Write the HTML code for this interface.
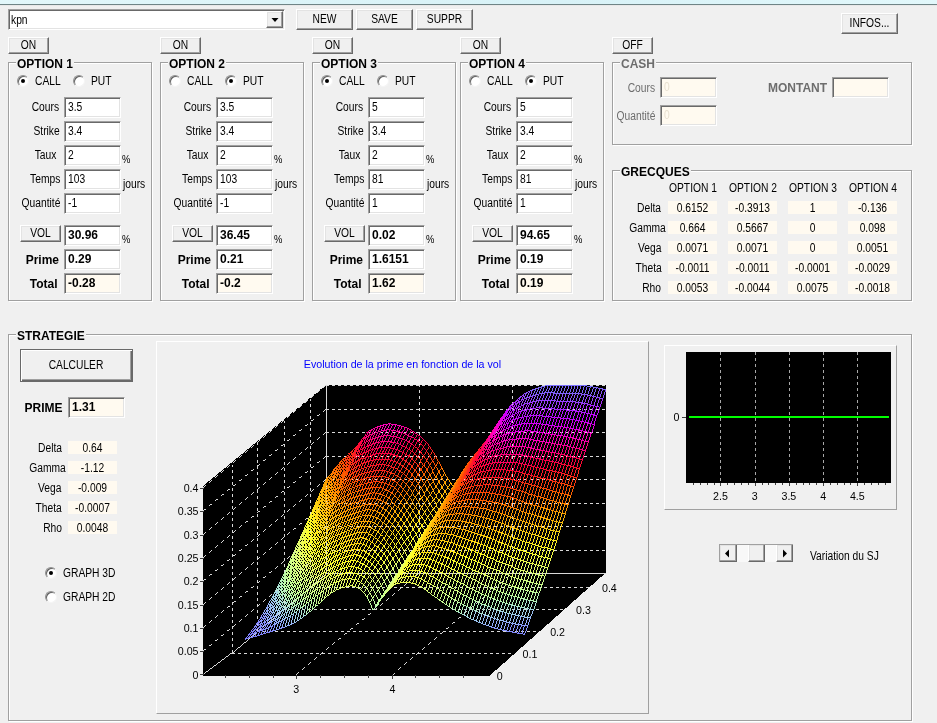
<!DOCTYPE html><html><head><meta charset="utf-8"><title>Options</title><style>
html,body{margin:0;padding:0}
body{width:937px;height:723px;overflow:hidden;background:#f0f0f0;position:relative;font-family:"Liberation Sans",Arial,sans-serif;font-size:12px;color:#000}
div,span{position:absolute;box-sizing:border-box;white-space:nowrap}
.t{line-height:14px;height:14px;transform:scaleX(.855);transform-origin:left center}
.tr{transform-origin:right center;text-align:right}
.tc{transform-origin:center center;text-align:center}
.b{font-weight:bold;transform:none}
.g{color:#6d6d6d}
.btn{background:#f0f0f0;border:1px solid;border-color:#fff #696969 #696969 #fff;box-shadow:inset -1px -1px 0 #a0a0a0,inset 1px 1px 0 #e3e3e3}
.in{background:#fff;border:1px solid;border-color:#a0a0a0 #fff #fff #a0a0a0;box-shadow:inset 1px 1px 0 #696969,inset -1px -1px 0 #e3e3e3}
.cr{background:#fffaf0}
.gb{border:1px solid #a0a0a0;box-shadow:1px 1px 0 #fff,inset 1px 1px 0 #fff}
.gt{background:#f0f0f0;font-weight:bold;line-height:14px;height:14px;padding:0 1px}
.cell{background:#fffaf0;height:13px}
.rad{width:12px;height:12px;border-radius:50%;background:#fff;border:1px solid;border-color:#909090 #f4f4f4 #f4f4f4 #909090;box-shadow:inset 1px 1px 0 #606060}
.rad i{position:absolute;left:3px;top:3px;width:4px;height:4px;border-radius:50%;background:#000}
.pl{font-size:10.67px;line-height:12px;height:12px}
</style></head><body>
<div id="ui" style="left:0;top:0;width:937px;height:723px;will-change:transform">
<div style="left:0;top:0;width:937px;height:4px;background:linear-gradient(90deg,#e2f7fa,#dcf4f8 30%,#d8f2f7 60%,#e2f8fb)"></div>
<div style="left:0;top:4px;width:937px;height:1px;background:#6f8486"></div>
<div style="left:0;top:5px;width:937px;height:1px;background:#e8e8e8"></div>
<div class="in" style="left:8px;top:9px;width:277px;height:21px"></div>
<span class="t " style="left:11px;top:12.5px;">kpn</span>
<div class="btn" style="left:266px;top:11px;width:17px;height:17px"></div>
<svg style="position:absolute;left:271px;top:18px" width="8" height="4"><path d="M0.5 0h7l-3.5 4z" fill="#000"/></svg>
<div class="btn" style="left:296px;top:9px;width:57px;height:21px"></div>
<span class="t tc " style="left:296.0px;width:57px;top:11.5px;">NEW</span>
<div class="btn" style="left:356px;top:9px;width:57px;height:21px"></div>
<span class="t tc " style="left:356.0px;width:57px;top:11.5px;">SAVE</span>
<div class="btn" style="left:416px;top:9px;width:57px;height:21px"></div>
<span class="t tc " style="left:416.0px;width:57px;top:11.5px;">SUPPR</span>
<div class="btn" style="left:841px;top:13px;width:57px;height:21px"></div>
<span class="t tc " style="left:841.0px;width:57px;top:15.5px;">INFOS...</span>
<div class="btn" style="left:8px;top:37px;width:41px;height:17px"></div>
<span class="t tc " style="left:8.0px;width:41px;top:37.5px;">ON</span>
<div class="gb" style="left:8px;top:62px;width:144px;height:239px"></div>
<span class="gt" style="left:16px;top:57px">OPTION 1</span>
<div class="rad" style="left:17px;top:75px"><i></i></div>
<span class="t " style="left:34.5px;top:74px;">CALL</span>
<div class="rad" style="left:73px;top:75px"></div>
<span class="t " style="left:90.5px;top:74px;">PUT</span>
<span class="t tr " style="right:877.5px;top:100px;">Cours</span>
<div class="in " style="left:64px;top:97px;width:57px;height:21px"></div>
<span class="t " style="left:68px;top:100px;">3.5</span>
<span class="t tr " style="right:877.5px;top:124px;">Strike</span>
<div class="in " style="left:64px;top:121px;width:57px;height:21px"></div>
<span class="t " style="left:68px;top:124px;">3.4</span>
<span class="t tr " style="right:880.5px;top:148px;">Taux</span>
<div class="in " style="left:64px;top:145px;width:57px;height:21px"></div>
<span class="t " style="left:68px;top:148px;">2</span>
<span class="t tr " style="right:876.7px;top:172px;">Temps</span>
<div class="in " style="left:64px;top:169px;width:57px;height:21px"></div>
<span class="t " style="left:68px;top:172px;">103</span>
<span class="t tr " style="right:876.7px;top:196px;">Quantité</span>
<div class="in " style="left:64px;top:193px;width:57px;height:21px"></div>
<span class="t " style="left:68px;top:196px;">-1</span>
<span class="t " style="left:121.5px;top:152px;font-size:11px">%</span>
<span class="t " style="left:123px;top:177px;">jours</span>
<div class="btn" style="left:20px;top:225px;width:41px;height:17px"></div>
<span class="t tc " style="left:20.0px;width:41px;top:225.5px;">VOL</span>
<div class="in " style="left:64px;top:225px;width:57px;height:21px"></div>
<span class="t b " style="left:68px;top:228px;">30.96</span>
<span class="t " style="left:121.5px;top:232px;font-size:11px">%</span>
<span class="t tr b" style="right:878px;top:253px;">Prime</span>
<div class="in " style="left:64px;top:249px;width:57px;height:21px"></div>
<span class="t b " style="left:68px;top:252px;">0.29</span>
<span class="t tr b" style="right:879.5px;top:277px;">Total</span>
<div class="in cr" style="left:64px;top:273px;width:57px;height:21px"></div>
<span class="t b " style="left:68px;top:276px;">-0.28</span>
<div class="btn" style="left:160px;top:37px;width:41px;height:17px"></div>
<span class="t tc " style="left:160.0px;width:41px;top:37.5px;">ON</span>
<div class="gb" style="left:160px;top:62px;width:144px;height:239px"></div>
<span class="gt" style="left:168px;top:57px">OPTION 2</span>
<div class="rad" style="left:169px;top:75px"></div>
<span class="t " style="left:186.5px;top:74px;">CALL</span>
<div class="rad" style="left:225px;top:75px"><i></i></div>
<span class="t " style="left:242.5px;top:74px;">PUT</span>
<span class="t tr " style="right:725.5px;top:100px;">Cours</span>
<div class="in " style="left:216px;top:97px;width:57px;height:21px"></div>
<span class="t " style="left:220px;top:100px;">3.5</span>
<span class="t tr " style="right:725.5px;top:124px;">Strike</span>
<div class="in " style="left:216px;top:121px;width:57px;height:21px"></div>
<span class="t " style="left:220px;top:124px;">3.4</span>
<span class="t tr " style="right:728.5px;top:148px;">Taux</span>
<div class="in " style="left:216px;top:145px;width:57px;height:21px"></div>
<span class="t " style="left:220px;top:148px;">2</span>
<span class="t tr " style="right:724.7px;top:172px;">Temps</span>
<div class="in " style="left:216px;top:169px;width:57px;height:21px"></div>
<span class="t " style="left:220px;top:172px;">103</span>
<span class="t tr " style="right:724.7px;top:196px;">Quantité</span>
<div class="in " style="left:216px;top:193px;width:57px;height:21px"></div>
<span class="t " style="left:220px;top:196px;">-1</span>
<span class="t " style="left:273.5px;top:152px;font-size:11px">%</span>
<span class="t " style="left:275px;top:177px;">jours</span>
<div class="btn" style="left:172px;top:225px;width:41px;height:17px"></div>
<span class="t tc " style="left:172.0px;width:41px;top:225.5px;">VOL</span>
<div class="in " style="left:216px;top:225px;width:57px;height:21px"></div>
<span class="t b " style="left:220px;top:228px;">36.45</span>
<span class="t " style="left:273.5px;top:232px;font-size:11px">%</span>
<span class="t tr b" style="right:726px;top:253px;">Prime</span>
<div class="in " style="left:216px;top:249px;width:57px;height:21px"></div>
<span class="t b " style="left:220px;top:252px;">0.21</span>
<span class="t tr b" style="right:727.5px;top:277px;">Total</span>
<div class="in cr" style="left:216px;top:273px;width:57px;height:21px"></div>
<span class="t b " style="left:220px;top:276px;">-0.2</span>
<div class="btn" style="left:312px;top:37px;width:41px;height:17px"></div>
<span class="t tc " style="left:312.0px;width:41px;top:37.5px;">ON</span>
<div class="gb" style="left:312px;top:62px;width:144px;height:239px"></div>
<span class="gt" style="left:320px;top:57px">OPTION 3</span>
<div class="rad" style="left:321px;top:75px"><i></i></div>
<span class="t " style="left:338.5px;top:74px;">CALL</span>
<div class="rad" style="left:377px;top:75px"></div>
<span class="t " style="left:394.5px;top:74px;">PUT</span>
<span class="t tr " style="right:573.5px;top:100px;">Cours</span>
<div class="in " style="left:368px;top:97px;width:57px;height:21px"></div>
<span class="t " style="left:372px;top:100px;">5</span>
<span class="t tr " style="right:573.5px;top:124px;">Strike</span>
<div class="in " style="left:368px;top:121px;width:57px;height:21px"></div>
<span class="t " style="left:372px;top:124px;">3.4</span>
<span class="t tr " style="right:576.5px;top:148px;">Taux</span>
<div class="in " style="left:368px;top:145px;width:57px;height:21px"></div>
<span class="t " style="left:372px;top:148px;">2</span>
<span class="t tr " style="right:572.7px;top:172px;">Temps</span>
<div class="in " style="left:368px;top:169px;width:57px;height:21px"></div>
<span class="t " style="left:372px;top:172px;">81</span>
<span class="t tr " style="right:572.7px;top:196px;">Quantité</span>
<div class="in " style="left:368px;top:193px;width:57px;height:21px"></div>
<span class="t " style="left:372px;top:196px;">1</span>
<span class="t " style="left:425.5px;top:152px;font-size:11px">%</span>
<span class="t " style="left:427px;top:177px;">jours</span>
<div class="btn" style="left:324px;top:225px;width:41px;height:17px"></div>
<span class="t tc " style="left:324.0px;width:41px;top:225.5px;">VOL</span>
<div class="in " style="left:368px;top:225px;width:57px;height:21px"></div>
<span class="t b " style="left:372px;top:228px;">0.02</span>
<span class="t " style="left:425.5px;top:232px;font-size:11px">%</span>
<span class="t tr b" style="right:574px;top:253px;">Prime</span>
<div class="in " style="left:368px;top:249px;width:57px;height:21px"></div>
<span class="t b " style="left:372px;top:252px;">1.6151</span>
<span class="t tr b" style="right:575.5px;top:277px;">Total</span>
<div class="in cr" style="left:368px;top:273px;width:57px;height:21px"></div>
<span class="t b " style="left:372px;top:276px;">1.62</span>
<div class="btn" style="left:460px;top:37px;width:41px;height:17px"></div>
<span class="t tc " style="left:460.0px;width:41px;top:37.5px;">ON</span>
<div class="gb" style="left:460px;top:62px;width:144px;height:239px"></div>
<span class="gt" style="left:468px;top:57px">OPTION 4</span>
<div class="rad" style="left:469px;top:75px"></div>
<span class="t " style="left:486.5px;top:74px;">CALL</span>
<div class="rad" style="left:525px;top:75px"><i></i></div>
<span class="t " style="left:542.5px;top:74px;">PUT</span>
<span class="t tr " style="right:425.5px;top:100px;">Cours</span>
<div class="in " style="left:516px;top:97px;width:57px;height:21px"></div>
<span class="t " style="left:520px;top:100px;">5</span>
<span class="t tr " style="right:425.5px;top:124px;">Strike</span>
<div class="in " style="left:516px;top:121px;width:57px;height:21px"></div>
<span class="t " style="left:520px;top:124px;">3.4</span>
<span class="t tr " style="right:428.5px;top:148px;">Taux</span>
<div class="in " style="left:516px;top:145px;width:57px;height:21px"></div>
<span class="t " style="left:520px;top:148px;">2</span>
<span class="t tr " style="right:424.70000000000005px;top:172px;">Temps</span>
<div class="in " style="left:516px;top:169px;width:57px;height:21px"></div>
<span class="t " style="left:520px;top:172px;">81</span>
<span class="t tr " style="right:424.70000000000005px;top:196px;">Quantité</span>
<div class="in " style="left:516px;top:193px;width:57px;height:21px"></div>
<span class="t " style="left:520px;top:196px;">1</span>
<span class="t " style="left:573.5px;top:152px;font-size:11px">%</span>
<span class="t " style="left:575px;top:177px;">jours</span>
<div class="btn" style="left:472px;top:225px;width:41px;height:17px"></div>
<span class="t tc " style="left:472.0px;width:41px;top:225.5px;">VOL</span>
<div class="in " style="left:516px;top:225px;width:57px;height:21px"></div>
<span class="t b " style="left:520px;top:228px;">94.65</span>
<span class="t " style="left:573.5px;top:232px;font-size:11px">%</span>
<span class="t tr b" style="right:426px;top:253px;">Prime</span>
<div class="in " style="left:516px;top:249px;width:57px;height:21px"></div>
<span class="t b " style="left:520px;top:252px;">0.19</span>
<span class="t tr b" style="right:427.5px;top:277px;">Total</span>
<div class="in cr" style="left:516px;top:273px;width:57px;height:21px"></div>
<span class="t b " style="left:520px;top:276px;">0.19</span>
<div class="btn" style="left:612px;top:37px;width:41px;height:17px"></div>
<span class="t tc " style="left:612.0px;width:41px;top:37.5px;">OFF</span>
<div class="gb" style="left:612px;top:62px;width:300px;height:83px"></div>
<span class="gt g" style="left:620px;top:57px">CASH</span>
<span class="t tr g" style="right:281.5px;top:80.5px;">Cours</span>
<div class="in cr" style="left:660px;top:77px;width:57px;height:21px"></div>
<span class="t " style="left:664px;top:80px;color:#e8e0d0">0</span>
<span class="t tr g" style="right:281.5px;top:108.5px;">Quantité</span>
<div class="in cr" style="left:660px;top:105px;width:57px;height:21px"></div>
<span class="t " style="left:664px;top:108px;color:#e8e0d0">0</span>
<span class="t b g" style="left:768px;top:80.5px;">MONTANT</span>
<div class="in cr" style="left:832px;top:77px;width:57px;height:21px"></div>
<div class="gb" style="left:612px;top:170px;width:300px;height:131px"></div>
<span class="gt" style="left:620px;top:165px">GRECQUES</span>
<span class="t tc " style="left:657.8px;width:70px;top:180.5px;">OPTION 1</span>
<span class="t tc " style="left:717.8px;width:70px;top:180.5px;">OPTION 2</span>
<span class="t tc " style="left:777.8px;width:70px;top:180.5px;">OPTION 3</span>
<span class="t tc " style="left:837.8px;width:70px;top:180.5px;">OPTION 4</span>
<span class="t tr " style="right:275.79999999999995px;top:200.5px;">Delta</span>
<div class="cell" style="left:668px;top:201px;width:49px"></div>
<span class="t tc " style="left:668.0px;width:49px;top:200.5px;">0.6152</span>
<div class="cell" style="left:728px;top:201px;width:49px"></div>
<span class="t tc " style="left:728.0px;width:49px;top:200.5px;">-0.3913</span>
<div class="cell" style="left:788px;top:201px;width:49px"></div>
<span class="t tc " style="left:788.0px;width:49px;top:200.5px;">1</span>
<div class="cell" style="left:848px;top:201px;width:49px"></div>
<span class="t tc " style="left:848.0px;width:49px;top:200.5px;">-0.136</span>
<span class="t tr " style="right:271.70000000000005px;top:220.5px;">Gamma</span>
<div class="cell" style="left:668px;top:221px;width:49px"></div>
<span class="t tc " style="left:668.0px;width:49px;top:220.5px;">0.664</span>
<div class="cell" style="left:728px;top:221px;width:49px"></div>
<span class="t tc " style="left:728.0px;width:49px;top:220.5px;">0.5667</span>
<div class="cell" style="left:788px;top:221px;width:49px"></div>
<span class="t tc " style="left:788.0px;width:49px;top:220.5px;">0</span>
<div class="cell" style="left:848px;top:221px;width:49px"></div>
<span class="t tc " style="left:848.0px;width:49px;top:220.5px;">0.098</span>
<span class="t tr " style="right:275.79999999999995px;top:240.5px;">Vega</span>
<div class="cell" style="left:668px;top:241px;width:49px"></div>
<span class="t tc " style="left:668.0px;width:49px;top:240.5px;">0.0071</span>
<div class="cell" style="left:728px;top:241px;width:49px"></div>
<span class="t tc " style="left:728.0px;width:49px;top:240.5px;">0.0071</span>
<div class="cell" style="left:788px;top:241px;width:49px"></div>
<span class="t tc " style="left:788.0px;width:49px;top:240.5px;">0</span>
<div class="cell" style="left:848px;top:241px;width:49px"></div>
<span class="t tc " style="left:848.0px;width:49px;top:240.5px;">0.0051</span>
<span class="t tr " style="right:275.79999999999995px;top:260.5px;">Theta</span>
<div class="cell" style="left:668px;top:261px;width:49px"></div>
<span class="t tc " style="left:668.0px;width:49px;top:260.5px;">-0.0011</span>
<div class="cell" style="left:728px;top:261px;width:49px"></div>
<span class="t tc " style="left:728.0px;width:49px;top:260.5px;">-0.0011</span>
<div class="cell" style="left:788px;top:261px;width:49px"></div>
<span class="t tc " style="left:788.0px;width:49px;top:260.5px;">-0.0001</span>
<div class="cell" style="left:848px;top:261px;width:49px"></div>
<span class="t tc " style="left:848.0px;width:49px;top:260.5px;">-0.0029</span>
<span class="t tr " style="right:275.79999999999995px;top:280.5px;">Rho</span>
<div class="cell" style="left:668px;top:281px;width:49px"></div>
<span class="t tc " style="left:668.0px;width:49px;top:280.5px;">0.0053</span>
<div class="cell" style="left:728px;top:281px;width:49px"></div>
<span class="t tc " style="left:728.0px;width:49px;top:280.5px;">-0.0044</span>
<div class="cell" style="left:788px;top:281px;width:49px"></div>
<span class="t tc " style="left:788.0px;width:49px;top:280.5px;">0.0075</span>
<div class="cell" style="left:848px;top:281px;width:49px"></div>
<span class="t tc " style="left:848.0px;width:49px;top:280.5px;">-0.0018</span>
<div class="gb" style="left:8px;top:334px;width:904px;height:387px"></div>
<span class="gt" style="left:16px;top:329px">STRATEGIE</span>
<div style="left:20px;top:349px;width:113px;height:33px;background:#f0f0f0;border:1px solid #696969;box-shadow:inset 1px 1px 0 #fff,inset -1px -1px 0 #696969,inset -2px -2px 0 #a0a0a0"></div>
<span class="t tc " style="left:26.0px;width:100px;top:358px;">CALCULER</span>
<span class="t b" style="left:24.5px;top:400.5px;">PRIME</span>
<div class="in cr" style="left:68px;top:397px;width:57px;height:21px"></div>
<span class="t b " style="left:72px;top:400px;">1.31</span>
<span class="t tr " style="right:875.2px;top:440.5px;">Delta</span>
<div class="cell" style="left:68px;top:441px;width:49px"></div>
<span class="t tc " style="left:68.0px;width:49px;top:440.5px;">0.64</span>
<span class="t tr " style="right:871.7px;top:460.5px;">Gamma</span>
<div class="cell" style="left:68px;top:461px;width:49px"></div>
<span class="t tc " style="left:68.0px;width:49px;top:460.5px;">-1.12</span>
<span class="t tr " style="right:875.2px;top:480.5px;">Vega</span>
<div class="cell" style="left:68px;top:481px;width:49px"></div>
<span class="t tc " style="left:68.0px;width:49px;top:480.5px;">-0.009</span>
<span class="t tr " style="right:875.2px;top:500.5px;">Theta</span>
<div class="cell" style="left:68px;top:501px;width:49px"></div>
<span class="t tc " style="left:68.0px;width:49px;top:500.5px;">-0.0007</span>
<span class="t tr " style="right:875.2px;top:520.5px;">Rho</span>
<div class="cell" style="left:68px;top:521px;width:49px"></div>
<span class="t tc " style="left:68.0px;width:49px;top:520.5px;">0.0048</span>
<div class="rad" style="left:45px;top:566.5px"><i></i></div>
<span class="t " style="left:62.5px;top:565.5px;">GRAPH 3D</span>
<div class="rad" style="left:45px;top:590.5px"></div>
<span class="t " style="left:62.5px;top:589.5px;">GRAPH 2D</span>
<div style="left:156px;top:341px;width:493px;height:373px;border:1px solid;border-color:#fff #a0a0a0 #a0a0a0 #fff"></div>
<div style="left:664px;top:345px;width:233px;height:165px;border:1px solid;border-color:#fff #a0a0a0 #a0a0a0 #fff"></div>
<div style="left:719px;top:544px;width:74px;height:18px;background:#f8f8f8"></div>
<div class="btn" style="left:719px;top:544px;width:18px;height:18px"></div>
<div class="btn" style="left:776px;top:544px;width:17px;height:18px"></div>
<div class="btn" style="left:748px;top:544px;width:17px;height:18px"></div>
<div style="left:719px;top:544px;width:74px;height:1px;background:#a0a0a0"></div><div style="left:719px;top:544px;width:1px;height:18px;background:#a0a0a0"></div>
<svg style="position:absolute;left:719px;top:544px" width="74" height="18"><path d="M10 5.5v8l-4-4zM64 5.5v8l4-4z" fill="#000"/></svg>
<span class="t " style="left:810px;top:549px;">Variation du SJ</span>
<svg style="position:absolute;left:0;top:0" width="937" height="723" viewBox="0 0 937 723" font-family="Liberation Sans,Arial,sans-serif" font-size="10.67">
<g shape-rendering="crispEdges">
<rect x="686" y="352" width="205" height="131" fill="#000"/>
<path d="M720.5 352V483" stroke="#a8a8a8" stroke-dasharray="3 3" fill="none"/>
<path d="M755.5 352V483" stroke="#a8a8a8" stroke-dasharray="3 3" fill="none"/>
<path d="M789.5 352V483" stroke="#a8a8a8" stroke-dasharray="3 3" fill="none"/>
<path d="M823.5 352V483" stroke="#a8a8a8" stroke-dasharray="3 3" fill="none"/>
<path d="M857.5 352V483" stroke="#a8a8a8" stroke-dasharray="3 3" fill="none"/>
<path d="M689 417H889" stroke="#00ff00" stroke-width="2" fill="none"/>
<path d="M693.5 483v2M700.5 483v2M707.5 483v2M714.5 483v2M720.5 483v3M727.5 483v2M734.5 483v2M741.5 483v2M748.5 483v2M755.5 483v3M762.5 483v2M768.5 483v2M775.5 483v2M782.5 483v2M789.5 483v3M796.5 483v2M803.5 483v2M809.5 483v2M816.5 483v2M823.5 483v3M830.5 483v2M837.5 483v2M844.5 483v2M850.5 483v2M857.5 483v3M864.5 483v2M871.5 483v2M878.5 483v2M885.5 483v2" stroke="#404040" fill="none"/>
<path d="M682 417.5h4" stroke="#404040" fill="none"/>
</g>
<text x="720.5" y="500" text-anchor="middle">2.5</text>
<text x="754.7" y="500" text-anchor="middle">3</text>
<text x="788.9" y="500" text-anchor="middle">3.5</text>
<text x="823.1" y="500" text-anchor="middle">4</text>
<text x="857.3" y="500" text-anchor="middle">4.5</text>
<text x="679.5" y="421" text-anchor="end">0</text>
<g shape-rendering="crispEdges" fill="none">
<path d="M203 486L326.3 384.7L605.5 384.7L605.5 573L489.3 676L203 676z" fill="#000"/>
<path d="M326.3 550.5H605.5M326.3 526.5H605.5M326.3 503.5H605.5M326.3 479.5H605.5M326.3 456.5H605.5M326.3 432.5H605.5M326.3 409.5H605.5M326.3 385.5H605.5M232.5 653.0V464.5M231.5 653.5H513.6M257.5 631.2V442.7M257.4 631.5H538.6M284.5 609.3V420.8M283.5 609.5H563.8M310.5 587.2V398.7M309.6 587.5H589.2M419.5 573.0V384.7M512.5 573.0V384.7" stroke="#d8d8d8" stroke-dasharray="3 3"/>
<path d="M203.0 651.2L326.3 549.5M203.0 627.9L326.3 526.1M203.0 604.5L326.3 502.6M203.0 581.2L326.3 479.1M203.0 557.9L326.3 455.7M203.0 534.5L326.3 432.2M203.0 511.2L326.3 408.7M203.0 487.9L326.3 385.3M296.0 674.7L419.4 573.0M392.5 674.7L512.4 573.0" stroke="#d8d8d8" stroke-width="0.99" stroke-dasharray="3.9 3.9"/>
<path d="M203 674.5L231.5 653L326.3 573" stroke="#d8d8d8" stroke-width="0.99"/><path d="M326.3 573.5H605.5M326.5 573V384.7" stroke="#d8d8d8"/>
</g>
<clipPath id="bx"><rect x="203" y="385" width="403" height="291"/></clipPath>
<g shape-rendering="crispEdges" fill="none" stroke-width="0.99" clip-path="url(#bx)">
<path d="M245.4 639.3L248.4 638.3L251.5 637.3L254.5 636.4L257.5 635.5M248.3 635.4L251.3 634.2L254.4 633.0M251.2 631.6L254.2 630.3M245.4 639.3L248.3 635.4L251.2 631.6L254.1 627.6M248.4 638.3L251.3 634.2L254.2 630.3M251.5 637.3L254.4 633.0" stroke="#7f80ff"/>
<path d="M257.5 635.5L260.6 634.6L263.6 633.7L266.7 632.9L269.7 632.1L272.7 631.2M509.5 631.7L512.6 632.3L515.6 632.8L518.6 633.3L521.7 633.8L524.7 634.2M254.4 633.0L257.4 631.8L260.4 630.6L263.5 629.3M254.2 630.3L257.3 628.9L260.3 627.5L263.3 626.0M254.1 627.6L257.1 626.1L260.1 624.5M257.0 623.4L260.0 621.7M254.1 627.6L257.0 623.4L259.8 619.0M254.2 630.3L257.1 626.1L260.0 621.7M254.4 633.0L257.3 628.9L260.1 624.5M254.5 636.4L257.4 631.8L260.3 627.5M257.5 635.5L260.4 630.6L263.3 626.0M260.6 634.6L263.5 629.3M263.6 633.7L266.5 628.1" stroke="#8487ff"/>
<path d="M272.7 631.2L275.8 630.2L278.8 629.2L281.8 628.1L284.9 627.0M491.3 627.0L494.3 628.0L497.4 628.9L500.4 629.7L503.4 630.4L506.5 631.1L509.5 631.7M263.5 629.3L266.5 628.1L269.5 626.8L272.6 625.4M521.5 625.2L524.6 625.7L527.6 626.1M263.3 626.0L266.4 624.4L269.4 622.9M260.1 624.5L263.2 622.9L266.2 621.1M260.0 621.7L263.0 619.9L266.1 618.0M259.8 619.0L262.9 617.1L265.9 615.1M259.8 619.0L262.7 614.3M260.0 621.7L262.9 617.1L265.8 612.2M260.1 624.5L263.0 619.9L265.9 615.1M260.3 627.5L263.2 622.9L266.1 618.0M263.3 626.0L266.2 621.1M263.5 629.3L266.4 624.4L269.2 619.3M266.5 628.1L269.4 622.9M266.7 632.9L269.5 626.8L272.4 621.2M269.7 632.1L272.6 625.4M272.7 631.2L275.6 623.9M506.5 631.1L509.4 622.7M509.5 631.7L512.4 623.4M512.6 632.3L515.4 624.0M515.6 632.8L518.5 624.6M518.6 633.3L521.5 625.2M521.7 633.8L524.6 625.7M524.7 634.2L527.6 626.1" stroke="#8a95ff"/>
<path d="M284.9 627.0L287.9 625.8L290.9 624.5L294.0 623.0M482.2 623.6L485.2 624.8L488.3 625.9L491.3 627.0M272.6 625.4L275.6 623.9L278.6 622.3L281.7 620.6M503.3 621.2L506.3 622.0L509.4 622.7L512.4 623.4L515.4 624.0L518.5 624.6L521.5 625.2M269.4 622.9L272.4 621.2L275.5 619.5M266.2 621.1L269.2 619.3L272.3 617.4L275.3 615.5M266.1 618.0L269.1 616.0L272.1 613.9M265.9 615.1L269.0 612.9L272.0 610.7M262.7 614.3L265.8 612.2L268.8 610.0M265.6 609.4L268.7 607.1M262.7 614.3L265.6 609.4L268.5 604.3M265.8 612.2L268.7 607.1M265.9 615.1L268.8 610.0M266.1 618.0L269.0 612.9M266.2 621.1L269.1 616.0L272.0 610.7M269.2 619.3L272.1 613.9M269.4 622.9L272.3 617.4M272.4 621.2L275.3 615.5M272.6 625.4L275.5 619.5M275.6 623.9L278.5 617.6M275.8 630.2L278.6 622.3M278.8 629.2L281.7 620.6M281.8 628.1L284.7 618.9M491.3 627.0L494.2 618.5M494.3 628.0L497.2 619.5M497.4 628.9L500.3 620.4M500.4 629.7L503.3 621.2M503.4 630.4L506.3 622.0M518.5 624.6L521.4 616.4M521.5 625.2L524.4 617.0M524.6 625.7L527.4 617.5M527.6 626.1L530.5 617.9" stroke="#94aeff"/>
<path d="M294.0 623.0L297.0 621.2L300.0 619.2M473.1 619.8L476.1 621.1L479.2 622.4L482.2 623.6M281.7 620.6L284.7 618.9L287.8 617.1M491.2 617.4L494.2 618.5L497.2 619.5L500.3 620.4L503.3 621.2M275.5 619.5L278.5 617.6L281.5 615.6M515.3 615.1L518.3 615.7L521.4 616.4L524.4 617.0L527.4 617.5L530.5 617.9M275.3 615.5L278.4 613.4M272.1 613.9L275.2 611.8L278.2 609.5M272.0 610.7L275.0 608.3M268.8 610.0L271.8 607.6L274.9 605.1M268.7 607.1L271.7 604.6L274.7 602.0M268.5 604.3L271.6 601.7M268.5 604.3L271.4 598.9M268.7 607.1L271.6 601.7M268.8 610.0L271.7 604.6L274.6 599.1M269.0 612.9L271.8 607.6L274.7 602.0M272.0 610.7L274.9 605.1M272.1 613.9L275.0 608.3M272.3 617.4L275.2 611.8M275.3 615.5L278.2 609.5M275.5 619.5L278.4 613.4M278.5 617.6L281.4 611.2M278.6 622.3L281.5 615.6M281.7 620.6L284.6 613.5M284.9 627.0L287.8 617.1M287.9 625.8L290.8 615.2M290.9 624.5L293.8 613.2M482.2 623.6L485.1 615.0M485.2 624.8L488.1 616.2M488.3 625.9L491.2 617.4M500.3 620.4L503.2 611.9M503.3 621.2L506.2 612.8M506.3 622.0L509.2 613.6M509.4 622.7L512.3 614.3M512.4 623.4L515.3 615.1M515.4 624.0L518.3 615.7M530.5 617.9L533.4 609.8" stroke="#9cc2f7"/>
<path d="M300.0 619.2L303.1 617.0L306.1 614.7M464.0 615.2L467.0 616.8L470.1 618.3L473.1 619.8M287.8 617.1L290.8 615.2L293.8 613.2M482.1 613.7L485.1 615.0L488.1 616.2L491.2 617.4M281.5 615.6L284.6 613.5L287.6 611.4M500.1 610.9L503.2 611.9L506.2 612.8L509.2 613.6L512.3 614.3L515.3 615.1M278.4 613.4L281.4 611.2L284.4 608.8M527.3 608.7L530.3 609.3L533.4 609.8M278.2 609.5L281.2 607.1M275.0 608.3L278.1 605.9L281.1 603.3M274.9 605.1L277.9 602.5M274.7 602.0L277.8 599.3M271.6 601.7L274.6 599.1L277.6 596.3M271.4 598.9L274.4 596.2L277.5 593.3M274.3 593.4L277.3 590.5M271.4 598.9L274.3 593.4M271.6 601.7L274.4 596.2L277.3 590.5M274.6 599.1L277.5 593.3M274.7 602.0L277.6 596.3M274.9 605.1L277.8 599.3M275.0 608.3L277.9 602.5M275.2 611.8L278.1 605.9L281.0 599.8M278.2 609.5L281.1 603.3M278.4 613.4L281.2 607.1M281.4 611.2L284.3 604.6M281.5 615.6L284.4 608.8M284.6 613.5L287.5 606.4M284.7 618.9L287.6 611.4M287.8 617.1L290.6 609.2M294.0 623.0L296.9 611.2M297.0 621.2L299.9 608.9M473.1 619.8L476.0 611.1M476.1 621.1L479.0 612.5M479.2 622.4L482.1 613.7M491.2 617.4L494.0 608.8M494.2 618.5L497.1 609.9M497.2 619.5L500.1 610.9M512.3 614.3L515.2 605.9M515.3 615.1L518.2 606.7M518.3 615.7L521.2 607.4M521.4 616.4L524.3 608.1M524.4 617.0L527.3 608.7M527.4 617.5L530.3 609.3" stroke="#a4d4ec"/>
<path d="M306.1 614.7L309.2 612.2M457.9 611.9L460.9 613.6L464.0 615.2M293.8 613.2L296.9 611.2L299.9 608.9M472.9 609.6L476.0 611.1L479.0 612.5L482.1 613.7M287.6 611.4L290.6 609.2L293.7 606.9M488.0 606.4L491.0 607.6L494.0 608.8L497.1 609.9L500.1 610.9M284.4 608.8L287.5 606.4L290.5 604.0M509.1 604.3L512.1 605.1L515.2 605.9L518.2 606.7L521.2 607.4L524.3 608.1L527.3 608.7M281.2 607.1L284.3 604.6L287.3 602.0M281.1 603.3L284.1 600.7M277.9 602.5L281.0 599.8L284.0 597.0M277.8 599.3L280.8 596.5M277.6 596.3L280.7 593.3M277.5 593.3L280.5 590.3M277.3 590.5L280.4 587.4M277.2 587.7L280.2 584.6M274.3 593.4L277.2 587.7L280.1 581.8M277.3 590.5L280.2 584.6M277.5 593.3L280.4 587.4M277.6 596.3L280.5 590.3M277.8 599.3L280.7 593.3M277.9 602.5L280.8 596.5M281.0 599.8L283.8 593.6M281.1 603.3L284.0 597.0M281.2 607.1L284.1 600.7M284.3 604.6L287.2 598.0M284.4 608.8L287.3 602.0M287.6 611.4L290.5 604.0M290.8 615.2L293.7 606.9M293.8 613.2L296.7 604.7M300.0 619.2L302.9 606.6M303.1 617.0L306.0 604.1M464.0 615.2L466.9 606.6M467.0 616.8L469.9 608.1M470.1 618.3L472.9 609.6M479.0 612.5L481.9 603.8M482.1 613.7L484.9 605.1M485.1 615.0L488.0 606.4M488.1 616.2L491.0 607.6M500.1 610.9L503.0 602.4M503.2 611.9L506.0 603.4M506.2 612.8L509.1 604.3M509.2 613.6L512.1 605.1M524.3 608.1L527.1 599.7M527.3 608.7L530.2 600.4M530.3 609.3L533.2 601.0M533.4 609.8L536.3 601.5" stroke="#ade5d5"/>
<path d="M309.2 612.2L312.2 609.8L315.2 607.2M372.9 609.9L375.9 606.9M451.8 608.3L454.9 610.1L457.9 611.9M299.9 608.9L302.9 606.6M463.8 605.0L466.9 606.6L469.9 608.1L472.9 609.6M293.7 606.9L296.7 604.7L299.8 602.4M478.9 602.4L481.9 603.8L484.9 605.1L488.0 606.4M290.5 604.0L293.5 601.5M496.9 600.2L500.0 601.3L503.0 602.4L506.0 603.4L509.1 604.3M287.3 602.0L290.4 599.3M521.1 598.2L524.1 599.0L527.1 599.7L530.2 600.4L533.2 601.0L536.3 601.5M284.1 600.7L287.2 598.0L290.2 595.1M284.0 597.0L287.0 594.2M280.8 596.5L283.8 593.6L286.9 590.6M280.7 593.3L283.7 590.3M280.5 590.3L283.5 587.2M280.4 587.4L283.4 584.2M280.2 584.6L283.3 581.4M280.1 581.8L283.1 578.6M280.1 581.8L283.0 575.8M280.2 584.6L283.1 578.6M280.4 587.4L283.3 581.4M280.5 590.3L283.4 584.2M280.7 593.3L283.5 587.2M280.8 596.5L283.7 590.3M283.8 593.6L286.7 587.2M284.0 597.0L286.9 590.6M284.1 600.7L287.0 594.2M287.3 602.0L290.2 595.1M287.5 606.4L290.4 599.3M290.5 604.0L293.4 596.7M290.6 609.2L293.5 601.5M293.7 606.9L296.6 599.1M296.9 611.2L299.8 602.4M299.9 608.9L302.8 600.0M306.1 614.7L309.0 601.7M372.9 609.9L375.8 605.5M457.9 611.9L460.8 603.3M460.9 613.6L463.8 605.0M472.9 609.6L475.8 601.0M476.0 611.1L478.9 602.4M488.0 606.4L490.9 597.7M491.0 607.6L493.9 599.0M494.0 608.8L496.9 600.2M497.1 609.9L500.0 601.3M509.1 604.3L512.0 595.7M512.1 605.1L515.0 596.6M515.2 605.9L518.0 597.4M518.2 606.7L521.1 598.2M521.2 607.4L524.1 599.0M536.3 601.5L539.1 593.2" stroke="#b6f5bc"/>
<path d="M315.2 607.2L318.3 604.3M369.9 602.6L372.9 609.9M375.9 606.9L379.0 602.1M445.8 604.4L448.8 606.4L451.8 608.3M302.9 606.6L306.0 604.1L309.0 601.7M372.8 598.2L375.8 605.5L378.8 602.5M457.8 601.7L460.8 603.3L463.8 605.0M299.8 602.4L302.8 600.0M378.7 601.1L381.7 598.2M472.8 599.5L475.8 601.0L478.9 602.4M293.5 601.5L296.6 599.1L299.6 596.6M487.8 596.5L490.9 597.7L493.9 599.0L496.9 600.2M290.4 599.3L293.4 596.7L296.4 594.0M505.9 593.8L508.9 594.8L512.0 595.7L515.0 596.6L518.0 597.4L521.1 598.2M290.2 595.1L293.2 592.3M533.1 592.0L536.1 592.6L539.1 593.2M287.0 594.2L290.1 591.2L293.1 588.2M286.9 590.6L289.9 587.5M283.7 590.3L286.7 587.2L289.8 584.0M283.5 587.2L286.6 584.0M283.4 584.2L286.4 580.9M283.3 581.4L286.3 578.0M283.1 578.6L286.1 575.2M283.0 575.8L286.0 572.4M283.0 575.8L285.9 569.7M283.1 578.6L286.0 572.4M283.3 581.4L286.1 575.2M283.4 584.2L286.3 578.0M283.5 587.2L286.4 580.9M283.7 590.3L286.6 584.0M286.7 587.2L289.6 580.7M286.9 590.6L289.8 584.0M287.0 594.2L289.9 587.5M287.2 598.0L290.1 591.2M290.2 595.1L293.1 588.2M290.4 599.3L293.2 592.3M293.5 601.5L296.4 594.0M296.7 604.7L299.6 596.6M299.8 602.4L302.6 594.2M302.9 606.6L305.8 597.6M309.2 612.2L312.0 599.3M312.2 609.8L315.1 597.0M375.8 605.5L378.7 601.1L381.6 596.7M375.9 606.9L378.8 602.5L381.7 598.2M451.8 608.3L454.7 599.9M454.9 610.1L457.8 601.7M463.8 605.0L466.7 596.4M466.9 606.6L469.8 597.9M469.9 608.1L472.8 599.5M478.9 602.4L481.8 593.8M481.9 603.8L484.8 595.2M484.9 605.1L487.8 596.5M496.9 600.2L499.8 591.6M500.0 601.3L502.9 592.7M503.0 602.4L505.9 593.8M506.0 603.4L508.9 594.8M518.0 597.4L520.9 588.9M521.1 598.2L524.0 589.7M524.1 599.0L527.0 590.5M527.1 599.7L530.0 591.3M530.2 600.4L533.1 592.0M533.2 601.0L536.1 592.6" stroke="#bffca8"/>
<path d="M318.3 604.3L321.3 601.3L324.3 598.5M366.8 597.1L369.9 602.6M379.0 602.1L382.0 597.9M439.7 600.3L442.7 602.3L445.8 604.4M309.0 601.7L312.0 599.3L315.1 597.0M378.8 602.5L381.9 597.8M451.7 598.0L454.7 599.9L457.8 601.7M302.8 600.0L305.8 597.6L308.9 595.1M375.6 593.9L378.7 601.1M381.7 598.2L384.8 593.4M463.7 594.8L466.7 596.4L469.8 597.9L472.8 599.5M299.6 596.6L302.6 594.2L305.7 591.8M378.5 589.7L381.6 596.7L384.6 593.8M478.7 592.3L481.8 593.8L484.8 595.2L487.8 596.5M296.4 594.0L299.5 591.4M384.5 592.4L387.5 589.4M496.8 590.4L499.8 591.6L502.9 592.7L505.9 593.8M293.2 592.3L296.3 589.4M517.9 588.0L520.9 588.9L524.0 589.7L527.0 590.5L530.0 591.3L533.1 592.0M293.1 588.2L296.1 585.2M289.9 587.5L292.9 584.4M289.8 584.0L292.8 580.8M286.6 584.0L289.6 580.7L292.7 577.4M286.4 580.9L289.5 577.5M286.3 578.0L289.3 574.5M286.1 575.2L289.2 571.7M286.0 572.4L289.0 568.9M285.9 569.7L288.9 566.2M285.9 569.7L288.7 563.5M286.0 572.4L288.9 566.2M286.1 575.2L289.0 568.9M286.3 578.0L289.2 571.7M286.4 580.9L289.3 574.5M286.6 584.0L289.5 577.5M289.6 580.7L292.5 574.1M289.8 584.0L292.7 577.4M289.9 587.5L292.8 580.8M290.1 591.2L292.9 584.4M293.1 588.2L296.0 581.3M293.2 592.3L296.1 585.2M293.4 596.7L296.3 589.4M296.4 594.0L299.3 586.5M296.6 599.1L299.5 591.4M299.6 596.6L302.5 588.9M302.8 600.0L305.7 591.8M306.0 604.1L308.9 595.1M309.0 601.7L311.9 592.7M315.2 607.2L318.1 594.6M369.9 602.6L372.8 598.2M381.6 596.7L384.5 592.4L387.4 588.0M381.7 598.2L384.6 593.8L387.5 589.4M379.0 602.1L381.9 597.8M445.8 604.4L448.7 596.2M448.8 606.4L451.7 598.0M457.8 601.7L460.7 593.2M460.8 603.3L463.7 594.8M472.8 599.5L475.7 590.9M475.8 601.0L478.7 592.3M487.8 596.5L490.7 587.8M490.9 597.7L493.8 589.1M493.9 599.0L496.8 590.4M505.9 593.8L508.8 585.2M508.9 594.8L511.8 586.2M512.0 595.7L514.9 587.1M515.0 596.6L517.9 588.0M530.0 591.3L532.9 582.7M533.1 592.0L536.0 583.5M536.1 592.6L539.0 584.2M539.1 593.2L542.0 584.8" stroke="#c7ff98"/>
<path d="M324.3 598.5L327.4 595.9M382.0 597.9L385.1 594.1M433.6 595.9L436.7 598.1L439.7 600.3M315.1 597.0L318.1 594.6M369.7 592.6L372.8 598.2M381.9 597.8L384.9 593.5M445.6 594.2L448.7 596.2L451.7 598.0M308.9 595.1L311.9 592.7L314.9 590.5M372.6 588.4L375.6 593.9M384.8 593.4L387.8 589.1M457.6 591.5L460.7 593.2L463.7 594.8M305.7 591.8L308.7 589.4M384.6 593.8L387.6 589.1M472.7 589.4L475.7 590.9L478.7 592.3M299.5 591.4L302.5 588.9L305.5 586.4M381.4 585.4L384.5 592.4M387.5 589.4L390.5 584.7M487.7 586.5L490.7 587.8L493.8 589.1L496.8 590.4M296.3 589.4L299.3 586.5L302.3 583.9M384.3 581.2L387.4 588.0L390.4 585.0M505.8 584.1L508.8 585.2L511.8 586.2L514.9 587.1L517.9 588.0M296.1 585.2L299.2 582.1M390.2 583.6L393.3 580.6M529.9 582.0L532.9 582.7L536.0 583.5L539.0 584.2L542.0 584.8M292.9 584.4L296.0 581.3L299.0 578.1M292.8 580.8L295.8 577.6M292.7 577.4L295.7 574.1M289.5 577.5L292.5 574.1L295.5 570.7M289.3 574.5L292.4 571.0M289.2 571.7L292.2 568.1M289.0 568.9L292.1 565.2M288.9 566.2L291.9 562.5M288.7 563.5L291.8 559.8M288.7 563.5L291.6 557.2M288.9 566.2L291.8 559.8M289.0 568.9L291.9 562.5M289.2 571.7L292.1 565.2M289.3 574.5L292.2 568.1M289.5 577.5L292.4 571.0M292.7 577.4L295.5 570.7M292.8 580.8L295.7 574.1M292.9 584.4L295.8 577.6M296.1 585.2L299.0 578.1M296.3 589.4L299.2 582.1M299.3 586.5L302.2 579.2M299.5 591.4L302.3 583.9M302.6 594.2L305.5 586.4M305.7 591.8L308.6 584.0M305.8 597.6L308.7 589.4M308.9 595.1L311.7 587.0M312.0 599.3L314.9 590.5M315.1 597.0L318.0 588.3M318.3 604.3L321.2 592.1M321.3 601.3L324.2 589.6M366.8 597.1L369.7 592.6M372.8 598.2L375.6 593.9L378.5 589.7M387.4 588.0L390.2 583.6L393.1 579.2M387.5 589.4L390.4 585.0M381.9 597.8L384.8 593.4L387.6 589.1M382.0 597.9L384.9 593.5M439.7 600.3L442.6 592.3M442.7 602.3L445.6 594.2M451.7 598.0L454.6 589.8M454.7 599.9L457.6 591.5M463.7 594.8L466.6 586.3M466.7 596.4L469.6 587.9M469.8 597.9L472.7 589.4M478.7 592.3L481.6 583.7M481.8 593.8L484.6 585.2M484.8 595.2L487.7 586.5M496.8 590.4L499.7 581.7M499.8 591.6L502.7 582.9M502.9 592.7L505.8 584.1M517.9 588.0L520.8 579.4M520.9 588.9L523.8 580.3M524.0 589.7L526.9 581.1M527.0 590.5L529.9 582.0M542.0 584.8L544.9 576.2" stroke="#cfff8e"/>
<path d="M327.4 595.9L330.4 593.7L333.4 591.7M363.8 592.6L366.8 597.1M385.1 594.1L388.1 590.8M427.6 591.5L430.6 593.6L433.6 595.9M318.1 594.6L321.2 592.1L324.2 589.6M366.7 587.9L369.7 592.6M384.9 593.5L387.9 589.7M439.5 590.3L442.6 592.3L445.6 594.2M314.9 590.5L318.0 588.3L321.0 586.2M451.5 588.0L454.6 589.8L457.6 591.5M308.7 589.4L311.7 587.0L314.8 584.7M375.5 584.1L378.5 589.7M387.6 589.1L390.7 584.7M463.5 584.8L466.6 586.3L469.6 587.9L472.7 589.4M305.5 586.4L308.6 584.0L311.6 581.6M378.4 579.9L381.4 585.4M390.5 584.7L393.6 580.3M478.6 582.3L481.6 583.7L484.6 585.2L487.7 586.5M302.3 583.9L305.4 581.3M390.4 585.0L393.4 580.3M496.6 580.5L499.7 581.7L502.7 582.9L505.8 584.1M299.2 582.1L302.2 579.2L305.2 576.5M387.2 576.9L390.2 583.6M393.3 580.6L396.3 575.9M514.7 577.5L517.7 578.5L520.8 579.4L523.8 580.3L526.9 581.1L529.9 582.0M299.0 578.1L302.1 575.0M390.1 572.7L393.1 579.2L396.2 576.2M541.9 575.6L544.9 576.2M295.8 577.6L298.9 574.3M396.0 574.8L399.1 571.8M295.7 574.1L298.7 570.8M295.5 570.7L298.6 567.3M292.4 571.0L295.4 567.5M292.2 568.1L295.3 564.5M292.1 565.2L295.1 561.6M291.9 562.5L295.0 558.8M291.8 559.8L294.8 556.0M291.6 557.2L294.7 553.4M291.6 557.2L294.5 550.8M291.8 559.8L294.7 553.4M291.9 562.5L294.8 556.0M292.1 565.2L295.0 558.8M292.2 568.1L295.1 561.6M292.4 571.0L295.3 564.5M292.5 574.1L295.4 567.5M295.5 570.7L298.4 564.1M295.7 574.1L298.6 567.3M295.8 577.6L298.7 570.8M296.0 581.3L298.9 574.3M299.0 578.1L301.9 571.1M299.2 582.1L302.1 575.0M302.3 583.9L305.2 576.5M302.5 588.9L305.4 581.3M305.5 586.4L308.4 578.8M308.7 589.4L311.6 581.6M311.9 592.7L314.8 584.7M314.9 590.5L317.8 582.5M318.1 594.6L321.0 586.2M324.3 598.5L327.2 587.3M369.7 592.6L372.6 588.4L375.5 584.1M378.5 589.7L381.4 585.4L384.3 581.2L387.2 576.9M393.1 579.2L396.0 574.8L398.9 570.5M390.4 585.0L393.3 580.6L396.2 576.2M387.6 589.1L390.5 584.7L393.4 580.3M384.9 593.5L387.8 589.1L390.7 584.7M385.1 594.1L387.9 589.7M433.6 595.9L436.5 588.3M436.7 598.1L439.5 590.3M442.6 592.3L445.5 584.4M445.6 594.2L448.5 586.2M448.7 596.2L451.5 588.0M457.6 591.5L460.5 583.2M460.7 593.2L463.5 584.8M472.7 589.4L475.5 580.8M475.7 590.9L478.6 582.3M487.7 586.5L490.6 577.9M490.7 587.8L493.6 579.2M493.8 589.1L496.6 580.5M505.8 584.1L508.6 575.4M508.8 585.2L511.7 576.5M511.8 586.2L514.7 577.5M514.9 587.1L517.7 578.5M526.9 581.1L529.7 572.5M529.9 582.0L532.8 573.3M532.9 582.7L535.8 574.1M536.0 583.5L538.9 574.9M539.0 584.2L541.9 575.6" stroke="#d7ff84"/>
<path d="M333.4 591.7L336.5 589.8L339.5 588.3M357.7 587.8L360.8 589.6L363.8 592.6M388.1 590.8L391.1 587.6M421.5 587.5L424.5 589.5L427.6 591.5M324.2 589.6L327.2 587.3L330.3 585.3M363.7 584.7L366.7 587.9M387.9 589.7L391.0 586.3M433.5 586.2L436.5 588.3L439.5 590.3M321.0 586.2L324.0 583.9M369.6 583.6L372.6 588.4M387.8 589.1L390.8 585.2L393.9 581.7M442.4 582.6L445.5 584.4L448.5 586.2L451.5 588.0M314.8 584.7L317.8 582.5L320.9 580.5M372.5 579.3L375.5 584.1M390.7 584.7L393.7 580.8M457.5 581.6L460.5 583.2L463.5 584.8M311.6 581.6L314.6 579.3M469.5 577.9L472.5 579.4L475.5 580.8L478.6 582.3M305.4 581.3L308.4 578.8L311.5 576.4M381.3 575.7L384.3 581.2M393.4 580.3L396.5 575.9M487.5 576.5L490.6 577.9L493.6 579.2L496.6 580.5M305.2 576.5L308.3 573.9M384.2 571.5L387.2 576.9M505.6 574.3L508.6 575.4L511.7 576.5L514.7 577.5M302.1 575.0L305.1 572.0M396.2 576.2L399.2 571.4M526.7 571.6L529.7 572.5L532.8 573.3L535.8 574.1L538.9 574.9L541.9 575.6M298.9 574.3L301.9 571.1L304.9 567.9M393.0 568.4L396.0 574.8M399.1 571.8L402.1 567.0M298.7 570.8L301.8 567.4M395.9 564.2L398.9 570.5L401.9 567.4M298.6 567.3L301.6 564.0M401.8 566.1L404.8 563.0M295.4 567.5L298.4 564.1L301.5 560.6M295.3 564.5L298.3 560.9M295.1 561.6L298.1 557.9M295.0 558.8L298.0 555.0M294.8 556.0L297.8 552.2M294.7 553.4L297.7 549.5M294.5 550.8L297.6 546.9M294.5 550.8L297.4 544.4M294.7 553.4L297.6 546.9M294.8 556.0L297.7 549.5M295.0 558.8L297.8 552.2M295.1 561.6L298.0 555.0M295.3 564.5L298.1 557.9M295.4 567.5L298.3 560.9M298.6 567.3L301.5 560.6M298.7 570.8L301.6 564.0M298.9 574.3L301.8 567.4M302.1 575.0L304.9 567.9M302.2 579.2L305.1 572.0M305.2 576.5L308.1 569.2M305.4 581.3L308.3 573.9M308.4 578.8L311.3 571.5M308.6 584.0L311.5 576.4M311.6 581.6L314.5 574.1M311.7 587.0L314.6 579.3M314.8 584.7L317.7 577.1M318.0 588.3L320.9 580.5M321.0 586.2L323.9 578.6M321.2 592.1L324.0 583.9M324.2 589.6L327.1 581.7M327.4 595.9L330.3 585.3M330.4 593.7L333.3 583.6M333.4 591.7L336.3 582.1M360.8 589.6L363.7 584.7M363.8 592.6L366.7 587.9L369.6 583.6M375.5 584.1L378.4 579.9L381.3 575.7M387.2 576.9L390.1 572.7L393.0 568.4M398.9 570.5L401.8 566.1L404.7 561.7M396.2 576.2L399.1 571.8L401.9 567.4M393.4 580.3L396.3 575.9L399.2 571.4M390.7 584.7L393.6 580.3L396.5 575.9M387.9 589.7L390.8 585.2L393.7 580.8M388.1 590.8L391.0 586.3M427.6 591.5L430.4 584.3M430.6 593.6L433.5 586.2M436.5 588.3L439.4 580.7M439.5 590.3L442.4 582.6M448.5 586.2L451.4 578.2M451.5 588.0L454.4 579.9M454.6 589.8L457.5 581.6M463.5 584.8L466.4 576.4M466.6 586.3L469.5 577.9M469.6 587.9L472.5 579.4M478.6 582.3L481.5 573.7M481.6 583.7L484.5 575.1M484.6 585.2L487.5 576.5M496.6 580.5L499.5 571.8M499.7 581.7L502.6 573.0M502.7 582.9L505.6 574.3M514.7 577.5L517.6 568.8M517.7 578.5L520.6 569.8M520.8 579.4L523.7 570.7M523.8 580.3L526.7 571.6M538.9 574.9L541.7 566.2M541.9 575.6L544.8 566.9M544.9 576.2L547.8 567.6" stroke="#deff7b"/>
<path d="M339.5 588.3L342.5 587.3L345.6 586.6L348.6 586.1L351.7 585.9L354.7 586.5L357.7 587.8M391.1 587.6L394.2 585.1L397.2 583.6M415.4 584.1L418.4 585.5L421.5 587.5M330.3 585.3L333.3 583.6L336.3 582.1M360.6 582.4L363.7 584.7M391.0 586.3L394.0 583.0M427.4 582.5L430.4 584.3L433.5 586.2M324.0 583.9L327.1 581.7L330.1 579.6M366.5 580.2L369.6 583.6M393.9 581.7L396.9 578.3M436.4 578.8L439.4 580.7L442.4 582.6M320.9 580.5L323.9 578.6L326.9 576.5M369.4 575.7L372.5 579.3M393.7 580.8L396.8 577.2M448.4 576.6L451.4 578.2L454.4 579.9L457.5 581.6M314.6 579.3L317.7 577.1L320.7 575.1M375.4 575.0L378.4 579.9M393.6 580.3L396.6 576.3M463.4 574.9L466.4 576.4L469.5 577.9M311.5 576.4L314.5 574.1L317.5 571.9M378.2 570.8L381.3 575.7M396.5 575.9L399.5 571.8M478.4 572.3L481.5 573.7L484.5 575.1L487.5 576.5M308.3 573.9L311.3 571.5L314.3 569.1M396.3 575.9L399.3 571.4M493.5 569.2L496.5 570.5L499.5 571.8L502.6 573.0L505.6 574.3M305.1 572.0L308.1 569.2L311.2 566.7M387.1 567.2L390.1 572.7M399.2 571.4L402.2 567.0M514.6 567.8L517.6 568.8L520.6 569.8L523.7 570.7L526.7 571.6M304.9 567.9L308.0 564.8M389.9 563.0L393.0 568.4M538.7 565.4L541.7 566.2L544.8 566.9L547.8 567.6M301.8 567.4L304.8 564.2M401.9 567.4L405.0 562.6M301.6 564.0L304.7 560.6M398.8 559.9L401.8 566.1M404.8 563.0L407.9 558.1M301.5 560.6L304.5 557.2M401.7 555.7L404.7 561.7L407.7 558.5M298.3 560.9L301.3 557.4L304.4 553.9M407.6 557.3L410.6 554.1M298.1 557.9L301.2 554.2M298.0 555.0L301.0 551.3M297.8 552.2L300.9 548.4M297.7 549.5L300.7 545.7M297.6 546.9L300.6 543.0M297.4 544.4L300.4 540.4M297.4 544.4L300.3 537.9M297.6 546.9L300.4 540.4M297.7 549.5L300.6 543.0M297.8 552.2L300.7 545.7M298.0 555.0L300.9 548.4M298.1 557.9L301.0 551.3M298.3 560.9L301.2 554.2M298.4 564.1L301.3 557.4M301.5 560.6L304.4 553.9M301.6 564.0L304.5 557.2M301.8 567.4L304.7 560.6M301.9 571.1L304.8 564.2M304.9 567.9L307.8 560.9M305.1 572.0L308.0 564.8M308.3 573.9L311.2 566.7M311.5 576.4L314.3 569.1M314.6 579.3L317.5 571.9M317.7 577.1L320.6 569.8M317.8 582.5L320.7 575.1M320.9 580.5L323.7 573.2M324.0 583.9L326.9 576.5M327.1 581.7L330.0 574.5M327.2 587.3L330.1 579.6M330.3 585.3L333.1 577.9M336.5 589.8L339.4 580.7M339.5 588.3L342.4 579.7M342.5 587.3L345.4 579.1M354.7 586.5L357.6 580.6M357.7 587.8L360.6 582.4M363.7 584.7L366.5 580.2M369.6 583.6L372.5 579.3L375.4 575.0M381.3 575.7L384.2 571.5L387.1 567.2M393.0 568.4L395.9 564.2L398.8 559.9M404.7 561.7L407.6 557.3L410.5 552.9M401.9 567.4L404.8 563.0L407.7 558.5M399.2 571.4L402.1 567.0L405.0 562.6M396.5 575.9L399.3 571.4L402.2 567.0M393.7 580.8L396.6 576.3L399.5 571.8M391.0 586.3L393.9 581.7L396.8 577.2M391.1 587.6L394.0 583.0L396.9 578.3M421.5 587.5L424.4 580.6M424.5 589.5L427.4 582.5M430.4 584.3L433.3 577.1M433.5 586.2L436.4 578.8M442.4 582.6L445.3 574.9M445.5 584.4L448.4 576.6M454.4 579.9L457.3 571.8M457.5 581.6L460.4 573.4M460.5 583.2L463.4 574.9M469.5 577.9L472.4 569.5M472.5 579.4L475.4 570.9M475.5 580.8L478.4 572.3M487.5 576.5L490.4 567.9M490.6 577.9L493.5 569.2M493.6 579.2L496.5 570.5M502.6 573.0L505.5 564.3M505.6 574.3L508.5 565.5M508.6 575.4L511.5 566.7M511.7 576.5L514.6 567.8M523.7 570.7L526.6 561.9M526.7 571.6L529.6 562.8M529.7 572.5L532.6 563.7M532.8 573.3L535.7 564.6M535.8 574.1L538.7 565.4" stroke="#e6ff6a"/>
<path d="M397.2 583.6L400.2 582.9L403.3 582.5L406.3 582.4L409.3 582.7L412.4 583.3L415.4 584.1M336.3 582.1L339.4 580.7L342.4 579.7L345.4 579.1L348.5 578.9L351.5 579.0L354.5 579.5L357.6 580.6L360.6 582.4M394.0 583.0L397.0 580.1L400.1 578.3L403.1 577.3M418.3 577.6L421.3 578.9L424.4 580.6L427.4 582.5M330.1 579.6L333.1 577.9L336.2 576.4L339.2 575.2M360.5 575.6L363.5 577.7L366.5 580.2M396.9 578.3L399.9 575.3M430.3 575.5L433.3 577.1L436.4 578.8M326.9 576.5L330.0 574.5L333.0 572.7M366.4 573.0L369.4 575.7M396.8 577.2L399.8 573.6M442.3 573.2L445.3 574.9L448.4 576.6M320.7 575.1L323.7 573.2L326.8 571.4M372.3 571.3L375.4 575.0M396.6 576.3L399.6 572.6L402.7 569.0M454.3 570.3L457.3 571.8L460.4 573.4L463.4 574.9M317.5 571.9L320.6 569.8L323.6 567.9M375.2 567.0L378.2 570.8M399.5 571.8L402.5 568.1M469.3 568.1L472.4 569.5L475.4 570.9L478.4 572.3M314.3 569.1L317.4 566.9M381.1 566.6L384.2 571.5M399.3 571.4L402.4 567.3M487.4 566.5L490.4 567.9L493.5 569.2M311.2 566.7L314.2 564.3M384.0 562.3L387.1 567.2M402.2 567.0L405.3 562.8M502.4 563.1L505.5 564.3L508.5 565.5L511.5 566.7L514.6 567.8M308.0 564.8L311.0 562.1M402.1 567.0L405.1 562.5M523.5 561.0L526.6 561.9L529.6 562.8L532.6 563.7L535.7 564.6L538.7 565.4M304.8 564.2L307.8 560.9L310.9 557.8M392.8 558.8L395.9 564.2M405.0 562.6L408.0 558.0M304.7 560.6L307.7 557.3M395.7 554.6L398.8 559.9M304.5 557.2L307.5 553.8M407.7 558.5L410.8 553.6M304.4 553.9L307.4 550.4M404.5 551.4L407.6 557.3M301.2 554.2L304.2 550.7M407.4 547.1L410.5 552.9L413.5 549.6M301.0 551.3L304.1 547.6M300.9 548.4L303.9 544.6M300.7 545.7L303.8 541.8M300.6 543.0L303.6 539.1M300.4 540.4L303.5 536.5M300.3 537.9L303.3 533.9M300.3 537.9L303.2 531.4M300.4 540.4L303.3 533.9M300.6 543.0L303.5 536.5M300.7 545.7L303.6 539.1M300.9 548.4L303.8 541.8M301.0 551.3L303.9 544.6M301.2 554.2L304.1 547.6M301.3 557.4L304.2 550.7M304.4 553.9L307.2 547.2M304.5 557.2L307.4 550.4M304.7 560.6L307.5 553.8M304.8 564.2L307.7 557.3M308.0 564.8L310.9 557.8M308.1 569.2L311.0 562.1M311.2 566.7L314.1 559.6M311.3 571.5L314.2 564.3M314.3 569.1L317.2 562.0M314.5 574.1L317.4 566.9M317.5 571.9L320.4 564.8M320.7 575.1L323.6 567.9M323.7 573.2L326.6 566.2M323.9 578.6L326.8 571.4M326.9 576.5L329.8 569.5M330.1 579.6L333.0 572.7M333.1 577.9L336.0 571.1M333.3 583.6L336.2 576.4M336.3 582.1L339.2 575.2M339.4 580.7L342.3 574.0M345.6 586.6L348.5 578.9M348.6 586.1L351.5 579.0M351.7 585.9L354.5 579.5L357.4 574.1M357.6 580.6L360.5 575.6M360.6 582.4L363.5 577.7L366.4 573.0M366.5 580.2L369.4 575.7L372.3 571.3M375.4 575.0L378.2 570.8L381.1 566.6M387.1 567.2L389.9 563.0L392.8 558.8M398.8 559.9L401.7 555.7L404.5 551.4M410.5 552.9L413.4 548.5L416.2 544.2M407.7 558.5L410.6 554.1L413.5 549.6M405.0 562.6L407.9 558.1L410.8 553.6M402.2 567.0L405.1 562.5L408.0 558.0M399.5 571.8L402.4 567.3L405.3 562.8M396.8 577.2L399.6 572.6L402.5 568.1M396.9 578.3L399.8 573.6M394.2 585.1L397.0 580.1L399.9 575.3M397.2 583.6L400.1 578.3M400.2 582.9L403.1 577.3M403.3 582.5L406.2 576.7M406.3 582.4L409.2 576.4M409.3 582.7L412.2 576.6M412.4 583.3L415.3 577.0M415.4 584.1L418.3 577.6M418.4 585.5L421.3 578.9M424.4 580.6L427.3 573.8M427.4 582.5L430.3 575.5M436.4 578.8L439.3 571.5M439.4 580.7L442.3 573.2M448.4 576.6L451.3 568.8M451.4 578.2L454.3 570.3M463.4 574.9L466.3 566.7M466.4 576.4L469.3 568.1M478.4 572.3L481.3 563.7M481.5 573.7L484.4 565.1M484.5 575.1L487.4 566.5M493.5 569.2L496.4 560.6M496.5 570.5L499.4 561.8M499.5 571.8L502.4 563.1M514.6 567.8L517.5 559.0M517.6 568.8L520.5 560.0M520.6 569.8L523.5 561.0M535.7 564.6L538.6 555.8M538.7 565.4L541.6 556.6M541.7 566.2L544.6 557.4M544.8 566.9L547.7 558.2M547.8 567.6L550.7 558.8" stroke="#efff55"/>
<path d="M403.1 577.3L406.2 576.7L409.2 576.4L412.2 576.6L415.3 577.0L418.3 577.6M339.2 575.2L342.3 574.0L345.3 573.1L348.3 572.7L351.4 572.7L354.4 573.3L357.4 574.1L360.5 575.6M399.9 575.3L403.0 573.2L406.0 571.8L409.0 570.9M421.2 571.2L424.2 572.3L427.3 573.8L430.3 575.5M333.0 572.7L336.0 571.1L339.1 569.8L342.1 568.7M360.3 569.0L363.4 570.7L366.4 573.0M399.8 573.6L402.8 570.5L405.9 568.1M433.2 568.5L436.2 569.9L439.3 571.5L442.3 573.2M326.8 571.4L329.8 569.5L332.9 567.7L335.9 566.0M366.2 565.9L369.3 568.5L372.3 571.3M402.7 569.0L405.7 565.7M448.2 567.3L451.3 568.8L454.3 570.3M323.6 567.9L326.6 566.2L329.7 564.5M372.2 563.9L375.2 567.0M402.5 568.1L405.6 564.4M460.2 563.8L463.2 565.2L466.3 566.7L469.3 568.1M317.4 566.9L320.4 564.8L323.5 562.8M378.1 562.6L381.1 566.6M402.4 567.3L405.4 563.5M478.3 562.4L481.3 563.7L484.4 565.1L487.4 566.5M314.2 564.3L317.2 562.0L320.3 559.8M381.0 558.3L384.0 562.3M405.3 562.8L408.3 559.0M493.3 559.2L496.4 560.6L499.4 561.8L502.4 563.1M311.0 562.1L314.1 559.6L317.1 557.2M386.9 558.1L389.9 563.0M405.1 562.5L408.2 558.3M511.4 556.8L514.4 557.9L517.5 559.0L520.5 560.0L523.5 561.0M310.9 557.8L313.9 555.1M389.8 553.8L392.8 558.8M408.0 558.0L411.1 553.8M535.5 554.9L538.6 555.8L541.6 556.6L544.6 557.4L547.7 558.2L550.7 558.8M307.7 557.3L310.7 553.9M407.9 558.1L410.9 553.5M307.5 553.8L310.6 550.4M398.6 550.4L401.7 555.7M410.8 553.6L413.8 549.0M307.4 550.4L310.4 547.0M401.5 546.1L404.5 551.4M410.6 554.1L413.6 549.2M304.2 550.7L307.2 547.2L310.3 543.7M413.5 549.6L416.5 544.7M304.1 547.6L307.1 544.0M410.3 542.9L413.4 548.5L416.4 545.2M303.9 544.6L307.0 541.0M413.2 538.6L416.2 544.2L419.3 540.7M303.8 541.8L306.8 538.0M303.6 539.1L306.7 535.2M303.5 536.5L306.5 532.5M303.3 533.9L306.4 529.9M303.2 531.4L306.2 527.4M303.2 531.4L306.1 524.9M303.3 533.9L306.2 527.4M303.5 536.5L306.4 529.9M303.6 539.1L306.5 532.5M303.8 541.8L306.7 535.2M303.9 544.6L306.8 538.0M304.1 547.6L307.0 541.0M304.2 550.7L307.1 544.0M307.4 550.4L310.3 543.7M307.5 553.8L310.4 547.0M307.7 557.3L310.6 550.4M307.8 560.9L310.7 553.9M310.9 557.8L313.8 550.8M311.0 562.1L313.9 555.1M314.1 559.6L316.9 552.6M314.2 564.3L317.1 557.2M317.2 562.0L320.1 555.0M317.4 566.9L320.3 559.8M320.4 564.8L323.3 557.8M320.6 569.8L323.5 562.8M323.6 567.9L326.5 561.0M326.8 571.4L329.7 564.5M329.8 569.5L332.7 562.8M330.0 574.5L332.9 567.7M333.0 572.7L335.9 566.0M336.2 576.4L339.1 569.8M339.2 575.2L342.1 568.7M342.3 574.0L345.1 567.7M342.4 579.7L345.3 573.1M345.4 579.1L348.3 572.7M348.5 578.9L351.4 572.7M351.5 579.0L354.4 573.3L357.3 567.8M357.4 574.1L360.3 569.0M360.5 575.6L363.4 570.7L366.2 565.9M366.4 573.0L369.3 568.5L372.2 563.9M372.3 571.3L375.2 567.0L378.1 562.6M381.1 566.6L384.0 562.3L386.9 558.1M392.8 558.8L395.7 554.6L398.6 550.4M404.5 551.4L407.4 547.1L410.3 542.9M416.2 544.2L419.1 539.8L422.0 535.4M413.5 549.6L416.4 545.2L419.3 540.7M410.8 553.6L413.6 549.2L416.5 544.7M408.0 558.0L410.9 553.5L413.8 549.0M405.3 562.8L408.2 558.3L411.1 553.8M402.5 568.1L405.4 563.5L408.3 559.0M399.8 573.6L402.7 569.0L405.6 564.4M399.9 575.3L402.8 570.5L405.7 565.7M400.1 578.3L403.0 573.2L405.9 568.1M403.1 577.3L406.0 571.8M406.2 576.7L409.0 570.9M409.2 576.4L412.1 570.5M412.2 576.6L415.1 570.5M415.3 577.0L418.2 570.7M418.3 577.6L421.2 571.2M421.3 578.9L424.2 572.3M427.3 573.8L430.1 567.1M430.3 575.5L433.2 568.5M433.3 577.1L436.2 569.9M442.3 573.2L445.2 565.7M445.3 574.9L448.2 567.3M454.3 570.3L457.2 562.4M457.3 571.8L460.2 563.8M460.4 573.4L463.2 565.2M469.3 568.1L472.2 559.8M472.4 569.5L475.2 561.1M475.4 570.9L478.3 562.4M484.4 565.1L487.2 556.5M487.4 566.5L490.3 557.9M490.4 567.9L493.3 559.2M502.4 563.1L505.3 554.4M505.5 564.3L508.3 555.6M508.5 565.5L511.4 556.8M511.5 566.7L514.4 557.9M523.5 561.0L526.4 552.1M526.6 561.9L529.5 553.1M529.6 562.8L532.5 554.0M532.6 563.7L535.5 554.9M547.7 558.2L550.6 549.3M550.7 558.8L553.6 550.0" stroke="#f6ff42"/>
<path d="M409.0 570.9L412.1 570.5L415.1 570.5L418.2 570.7L421.2 571.2M342.1 568.7L345.1 567.7L348.2 566.9L351.2 566.5L354.3 566.9L357.3 567.8L360.3 569.0M405.9 568.1L408.9 566.4L411.9 565.3M424.1 564.8L427.1 565.7L430.1 567.1L433.2 568.5M335.9 566.0L338.9 564.6L342.0 563.5L345.0 562.4M360.2 562.5L363.2 563.9L366.2 565.9M405.7 565.7L408.8 563.1M439.1 562.8L442.1 564.2L445.2 565.7L448.2 567.3M329.7 564.5L332.7 562.8L335.7 561.1L338.8 559.6M369.1 561.2L372.2 563.9M405.6 564.4L408.6 560.9M451.1 559.7L454.1 561.0L457.2 562.4L460.2 563.8M323.5 562.8L326.5 561.0L329.5 559.4L332.6 557.8M375.1 559.4L378.1 562.6M405.4 563.5L408.5 559.7L411.5 556.2M469.2 558.4L472.2 559.8L475.2 561.1L478.3 562.4M320.3 559.8L323.3 557.8L326.3 555.9M378.0 554.9L381.0 558.3M408.3 559.0L411.3 555.1M484.2 555.2L487.2 556.5L490.3 557.9L493.3 559.2M317.1 557.2L320.1 555.0L323.2 552.9M383.9 553.9L386.9 558.1M408.2 558.3L411.2 554.4M502.3 553.1L505.3 554.4L508.3 555.6L511.4 556.8M313.9 555.1L316.9 552.6L320.0 550.3M386.8 549.6L389.8 553.8M411.1 553.8L414.1 549.8M523.4 551.2L526.4 552.1L529.5 553.1L532.5 554.0L535.5 554.9M310.7 553.9L313.8 550.8L316.8 548.1M392.7 549.6L395.7 554.6M410.9 553.5L413.9 549.3M547.5 548.5L550.6 549.3L553.6 550.0M310.6 550.4L313.6 547.1M395.6 545.4L398.6 550.4M413.8 549.0L416.8 544.7M310.4 547.0L313.5 543.7M413.6 549.2L416.7 544.5M310.3 543.7L313.3 540.3M404.4 541.9L407.4 547.1M416.5 544.7L419.6 540.0M307.1 544.0L310.1 540.5M407.3 537.7L410.3 542.9M416.4 545.2L419.4 540.2M307.0 541.0L310.0 537.4M419.3 540.7L422.3 535.6M306.8 538.0L309.8 534.3M416.1 534.4L419.1 539.8L422.2 536.3M306.7 535.2L309.7 531.4M419.0 530.1L422.0 535.4L425.1 531.8M306.5 532.5L309.6 528.6M306.4 529.9L309.4 525.9M306.2 527.4L309.3 523.3M306.1 524.9L309.1 520.8M306.1 524.9L309.0 518.4M306.2 527.4L309.1 520.8M306.4 529.9L309.3 523.3M306.5 532.5L309.4 525.9M306.7 535.2L309.6 528.6M306.8 538.0L309.7 531.4M307.0 541.0L309.8 534.3M307.1 544.0L310.0 537.4M307.2 547.2L310.1 540.5M310.3 543.7L313.2 537.1M310.4 547.0L313.3 540.3M310.6 550.4L313.5 543.7M310.7 553.9L313.6 547.1M313.8 550.8L316.6 543.9M313.9 555.1L316.8 548.1M317.1 557.2L320.0 550.3M320.3 559.8L323.2 552.9M323.5 562.8L326.3 555.9M326.5 561.0L329.4 554.3M326.6 566.2L329.5 559.4M329.7 564.5L332.6 557.8M332.7 562.8L335.6 556.3M332.9 567.7L335.7 561.1M335.9 566.0L338.8 559.6M336.0 571.1L338.9 564.6M339.1 569.8L342.0 563.5M342.1 568.7L345.0 562.4M345.1 567.7L348.0 561.5M345.3 573.1L348.2 566.9M348.3 572.7L351.2 566.5M351.4 572.7L354.3 566.9L357.1 561.3M357.3 567.8L360.2 562.5M360.3 569.0L363.2 563.9M366.2 565.9L369.1 561.2M372.2 563.9L375.1 559.4L378.0 554.9M378.1 562.6L381.0 558.3L383.9 553.9M386.9 558.1L389.8 553.8L392.7 549.6L395.6 545.4M398.6 550.4L401.5 546.1L404.4 541.9M410.3 542.9L413.2 538.6L416.1 534.4M422.0 535.4L424.9 531.0L427.8 526.6M419.3 540.7L422.2 536.3L425.1 531.8M416.5 544.7L419.4 540.2L422.3 535.6M413.8 549.0L416.7 544.5M411.1 553.8L413.9 549.3M408.3 559.0L411.2 554.4L414.1 549.8M405.6 564.4L408.5 559.7L411.3 555.1M405.7 565.7L408.6 560.9M405.9 568.1L408.8 563.1M406.0 571.8L408.9 566.4M409.0 570.9L411.9 565.3M412.1 570.5L415.0 564.6M415.1 570.5L418.0 564.4M418.2 570.7L421.0 564.5M421.2 571.2L424.1 564.8M424.2 572.3L427.1 565.7M433.2 568.5L436.1 561.6M436.2 569.9L439.1 562.8M439.3 571.5L442.1 564.2M445.2 565.7L448.1 558.2M448.2 567.3L451.1 559.7M451.3 568.8L454.1 561.0M460.2 563.8L463.1 555.8M463.2 565.2L466.1 557.1M466.3 566.7L469.2 558.4M475.2 561.1L478.1 552.7M478.3 562.4L481.2 553.9M481.3 563.7L484.2 555.2M493.3 559.2L496.2 550.6M496.4 560.6L499.2 551.9M499.4 561.8L502.3 553.1M511.4 556.8L514.3 548.0M514.4 557.9L517.3 549.1M517.5 559.0L520.3 550.2M520.5 560.0L523.4 551.2M535.5 554.9L538.4 546.0M538.6 555.8L541.4 546.9M541.6 556.6L544.5 547.7M544.6 557.4L547.5 548.5" stroke="#fcff31"/>
<path d="M411.9 565.3L415.0 564.6L418.0 564.4L421.0 564.5L424.1 564.8M345.0 562.4L348.0 561.5L351.1 560.8L354.1 560.7L357.1 561.3L360.2 562.5M408.8 563.1L411.8 561.1L414.8 559.7L417.9 558.9M427.0 558.4L430.0 559.1L433.0 560.3L436.1 561.6L439.1 562.8M338.8 559.6L341.8 558.3L344.9 557.2L347.9 556.3M360.0 555.9L363.1 557.3L366.1 559.0L369.1 561.2M408.6 560.9L411.6 558.1L414.7 555.9M445.0 556.9L448.1 558.2L451.1 559.7M332.6 557.8L335.6 556.3L338.6 554.7M369.0 554.1L372.0 556.5L375.1 559.4M411.5 556.2L414.5 553.2M460.1 554.5L463.1 555.8L466.1 557.1L469.2 558.4M326.3 555.9L329.4 554.3L332.4 552.8L335.5 551.3M374.9 551.9L378.0 554.9M411.3 555.1L414.4 551.5M475.1 551.5L478.1 552.7L481.2 553.9L484.2 555.2M323.2 552.9L326.2 551.0L329.2 549.2M380.8 550.4L383.9 553.9M411.2 554.4L414.2 550.5M493.2 549.2L496.2 550.6L499.2 551.9L502.3 553.1M320.0 550.3L323.0 548.2L326.0 546.1M383.7 546.0L386.8 549.6M414.1 549.8L417.1 545.9M511.2 546.8L514.3 548.0L517.3 549.1L520.3 550.2L523.4 551.2M316.8 548.1L319.8 545.7L322.9 543.5M389.7 545.3L392.7 549.6M413.9 549.3L417.0 545.2M532.3 544.2L535.4 545.1L538.4 546.0L541.4 546.9L544.5 547.7L547.5 548.5M313.6 547.1L316.6 543.9L319.7 541.3M392.5 541.0L395.6 545.4M416.8 544.7L419.9 540.6M313.5 543.7L316.5 540.3M398.5 541.1L401.5 546.1M416.7 544.5L419.7 540.1M313.3 540.3L316.4 537.0M401.4 536.9L404.4 541.9M419.6 540.0L422.6 535.6M310.1 540.5L313.2 537.1L316.2 533.7M404.2 532.7L407.3 537.7M419.4 540.2L422.5 535.4M310.0 537.4L313.0 533.9M410.2 533.5L413.2 538.6M422.3 535.6L425.4 530.9M309.8 534.3L312.9 530.8M413.1 529.2L416.1 534.4M422.2 536.3L425.2 531.1M309.7 531.4L312.7 527.7M425.1 531.8L428.1 526.6M309.6 528.6L312.6 524.8M421.9 525.8L424.9 531.0L427.9 527.3M309.4 525.9L312.4 522.0M424.8 521.6L427.8 526.6L430.8 522.8M309.3 523.3L312.3 519.4M309.1 520.8L312.1 516.8M309.0 518.4L312.0 514.3M309.0 518.4L311.9 511.8M309.1 520.8L312.0 514.3M309.3 523.3L312.1 516.8M309.4 525.9L312.3 519.4M309.6 528.6L312.4 522.0M309.7 531.4L312.6 524.8M309.8 534.3L312.7 527.7M310.0 537.4L312.9 530.8M310.1 540.5L313.0 533.9M313.3 540.3L316.2 533.7M313.5 543.7L316.4 537.0M313.6 547.1L316.5 540.3M316.8 548.1L319.7 541.3M316.9 552.6L319.8 545.7M320.0 550.3L322.9 543.5M320.1 555.0L323.0 548.2M323.2 552.9L326.0 546.1M323.3 557.8L326.2 551.0M326.3 555.9L329.2 549.2M329.4 554.3L332.3 547.6M329.5 559.4L332.4 552.8M332.6 557.8L335.5 551.3M335.6 556.3L338.5 549.8M335.7 561.1L338.6 554.7M338.8 559.6L341.7 553.3M338.9 564.6L341.8 558.3M342.0 563.5L344.9 557.2M345.0 562.4L347.9 556.3M348.0 561.5L350.9 555.5M348.2 566.9L351.1 560.8L354.0 554.9M351.2 566.5L354.1 560.7L357.0 555.0M357.1 561.3L360.0 555.9M360.2 562.5L363.1 557.3M363.2 563.9L366.1 559.0L369.0 554.1M369.1 561.2L372.0 556.5L374.9 551.9M378.0 554.9L380.8 550.4L383.7 546.0M383.9 553.9L386.8 549.6L389.7 545.3M395.6 545.4L398.5 541.1L401.4 536.9M404.4 541.9L407.3 537.7L410.2 533.5M416.1 534.4L419.0 530.1L421.9 525.8M427.8 526.6L430.7 522.3L433.6 517.9M425.1 531.8L427.9 527.3L430.8 522.8M422.3 535.6L425.2 531.1M416.7 544.5L419.6 540.0L422.5 535.4M413.9 549.3L416.8 544.7L419.7 540.1M414.1 549.8L417.0 545.2M411.3 555.1L414.2 550.5L417.1 545.9M408.6 560.9L411.5 556.2L414.4 551.5M408.8 563.1L411.6 558.1L414.5 553.2M408.9 566.4L411.8 561.1L414.7 555.9M411.9 565.3L414.8 559.7M415.0 564.6L417.9 558.9M418.0 564.4L420.9 558.5M421.0 564.5L423.9 558.3M424.1 564.8L427.0 558.4M427.1 565.7L430.0 559.1M430.1 567.1L433.0 560.3M436.1 561.6L439.0 554.7M439.1 562.8L442.0 555.7M442.1 564.2L445.0 556.9M451.1 559.7L454.0 552.1M454.1 561.0L457.0 553.3M457.2 562.4L460.1 554.5M466.1 557.1L469.0 549.0M469.2 558.4L472.1 550.2M472.2 559.8L475.1 551.5M484.2 555.2L487.1 546.6M487.2 556.5L490.1 547.9M490.3 557.9L493.2 549.2M502.3 553.1L505.2 544.4M505.3 554.4L508.2 545.6M508.3 555.6L511.2 546.8M520.3 550.2L523.2 541.3M523.4 551.2L526.3 542.3M526.4 552.1L529.3 543.2M529.5 553.1L532.3 544.2M532.5 554.0L535.4 545.1M547.5 548.5L550.4 539.6M550.6 549.3L553.4 540.4M553.6 550.0L556.5 541.1" stroke="#fff925"/>
<path d="M417.9 558.9L420.9 558.5L423.9 558.3L427.0 558.4M347.9 556.3L350.9 555.5L354.0 554.9L357.0 555.0L360.0 555.9M414.7 555.9L417.7 554.2L420.7 553.1L423.8 552.5M432.9 552.6L435.9 553.6L439.0 554.7L442.0 555.7L445.0 556.9M338.6 554.7L341.7 553.3L344.7 552.1L347.7 551.1L350.8 550.3M362.9 550.6L366.0 552.2L369.0 554.1M414.5 553.2L417.6 550.8M447.9 549.6L451.0 550.8L454.0 552.1L457.0 553.3L460.1 554.5M335.5 551.3L338.5 549.8L341.5 548.4L344.6 547.1M368.8 547.2L371.9 549.3L374.9 551.9M414.4 551.5L417.4 548.3M466.0 547.8L469.0 549.0L472.1 550.2L475.1 551.5M329.2 549.2L332.3 547.6L335.3 546.2L338.3 544.9M374.8 544.5L377.8 547.2L380.8 550.4M414.2 550.5L417.3 546.8M484.1 545.4L487.1 546.6L490.1 547.9L493.2 549.2M326.0 546.1L329.1 544.3L332.1 542.6M380.7 542.6L383.7 546.0M417.1 545.9L420.2 542.1M502.1 543.2L505.2 544.4L508.2 545.6L511.2 546.8M322.9 543.5L325.9 541.4M386.6 541.5L389.7 545.3M417.0 545.2L420.0 541.2M520.2 540.2L523.2 541.3L526.3 542.3L529.3 543.2L532.3 544.2M319.7 541.3L322.7 538.9M389.5 537.1L392.5 541.0M419.9 540.6L422.9 536.6M544.3 537.9L547.4 538.8L550.4 539.6L553.4 540.4L556.5 541.1M316.5 540.3L319.5 537.1M395.4 536.6L398.5 541.1M419.7 540.1L422.8 536.0M316.4 537.0L319.4 533.6M398.3 532.3L401.4 536.9M316.2 533.7L319.2 530.4M422.5 535.4L425.5 531.0M313.0 533.9L316.1 530.5L319.1 527.1M407.1 528.4L410.2 533.5M312.9 530.8L315.9 527.3M410.0 524.2L413.1 529.2M425.2 531.1L428.2 526.3M312.7 527.7L315.8 524.2M416.0 525.0L419.0 530.1M428.1 526.6L431.1 521.7M312.6 524.8L315.6 521.2M418.8 520.8L421.9 525.8M427.9 527.3L431.0 522.0M312.4 522.0L315.5 518.3M430.8 522.8L433.9 517.5M312.3 519.4L315.3 515.5M427.7 517.3L430.7 522.3L433.7 518.4M312.1 516.8L315.2 512.8M430.5 513.0L433.6 517.9L436.6 513.9M312.0 514.3L315.0 510.2M312.0 514.3L314.9 507.7M312.1 516.8L315.0 510.2M312.3 519.4L315.2 512.8M312.4 522.0L315.3 515.5M312.6 524.8L315.5 518.3M312.7 527.7L315.6 521.2M312.9 530.8L315.8 524.2M313.0 533.9L315.9 527.3M313.2 537.1L316.1 530.5M316.2 533.7L319.1 527.1M316.4 537.0L319.2 530.4M316.5 540.3L319.4 533.6M316.6 543.9L319.5 537.1M319.7 541.3L322.6 534.5M319.8 545.7L322.7 538.9M322.9 543.5L325.8 536.7M323.0 548.2L325.9 541.4M326.0 546.1L328.9 539.5M326.2 551.0L329.1 544.3M329.2 549.2L332.1 542.6M332.3 547.6L335.2 541.1M332.4 552.8L335.3 546.2M335.5 551.3L338.3 544.9M338.5 549.8L341.4 543.5M338.6 554.7L341.5 548.4M341.7 553.3L344.6 547.1M341.8 558.3L344.7 552.1L347.6 546.0M344.9 557.2L347.7 551.1M347.9 556.3L350.8 550.3M350.9 555.5L353.8 549.5M354.0 554.9L356.8 549.1M357.0 555.0L359.9 549.5M360.0 555.9L362.9 550.6M363.1 557.3L366.0 552.2L368.8 547.2M369.0 554.1L371.9 549.3L374.8 544.5M374.9 551.9L377.8 547.2L380.7 542.6M383.7 546.0L386.6 541.5M389.7 545.3L392.5 541.0L395.4 536.6M401.4 536.9L404.2 532.7L407.1 528.4M410.2 533.5L413.1 529.2L416.0 525.0L418.8 520.8M421.9 525.8L424.8 521.6L427.7 517.3M433.6 517.9L436.5 513.5L439.4 509.1M430.8 522.8L433.7 518.4L436.6 513.9M425.2 531.1L428.1 526.6L431.0 522.0M422.5 535.4L425.4 530.9L428.2 526.3M419.7 540.1L422.6 535.6L425.5 531.0M417.0 545.2L419.9 540.6L422.8 536.0M417.1 545.9L420.0 541.2M414.4 551.5L417.3 546.8L420.2 542.1M414.5 553.2L417.4 548.3M414.7 555.9L417.6 550.8M414.8 559.7L417.7 554.2L420.6 548.8M417.9 558.9L420.7 553.1M420.9 558.5L423.8 552.5M423.9 558.3L426.8 552.2M427.0 558.4L429.9 552.1M430.0 559.1L432.9 552.6M433.0 560.3L435.9 553.6M442.0 555.7L444.9 548.6M445.0 556.9L447.9 549.6M448.1 558.2L451.0 550.8M457.0 553.3L459.9 545.6M460.1 554.5L463.0 546.6M463.1 555.8L466.0 547.8M475.1 551.5L478.0 543.2M478.1 552.7L481.0 544.3M481.2 553.9L484.1 545.4M493.2 549.2L496.1 540.6M496.2 550.6L499.1 541.9M499.2 551.9L502.1 543.2M511.2 546.8L514.1 538.0M514.3 548.0L517.2 539.1M517.3 549.1L520.2 540.2M532.3 544.2L535.2 535.2M535.4 545.1L538.3 536.1M538.4 546.0L541.3 537.0M541.4 546.9L544.3 537.9M544.5 547.7L547.4 538.8" stroke="#ffec1f"/>
<path d="M423.8 552.5L426.8 552.2L429.9 552.1L432.9 552.6M350.8 550.3L353.8 549.5L356.8 549.1L359.9 549.5L362.9 550.6M417.6 550.8L420.6 548.8L423.6 547.5L426.7 546.7L429.7 546.1M435.8 546.1L438.8 546.9L441.9 547.8L444.9 548.6L447.9 549.6M344.6 547.1L347.6 546.0L350.6 545.1L353.7 544.3L356.7 543.6M362.8 544.1L365.8 545.4L368.8 547.2M417.4 548.3L420.5 545.7L423.5 543.5M453.8 543.4L456.9 544.5L459.9 545.6L463.0 546.6L466.0 547.8M338.3 544.9L341.4 543.5L344.4 542.2L347.4 541.0M371.7 542.2L374.8 544.5M417.3 546.8L420.3 543.5L423.3 540.6M471.9 540.9L475.0 542.0L478.0 543.2L481.0 544.3L484.1 545.4M332.1 542.6L335.2 541.1L338.2 539.8L341.2 538.5M377.7 539.8L380.7 542.6M420.2 542.1L423.2 538.7M493.0 539.3L496.1 540.6L499.1 541.9L502.1 543.2M325.9 541.4L328.9 539.5L332.0 537.7L335.0 536.1M383.6 538.0L386.6 541.5M420.0 541.2L423.1 537.4M511.1 536.8L514.1 538.0L517.2 539.1L520.2 540.2M322.7 538.9L325.8 536.7L328.8 534.7M386.5 533.5L389.5 537.1M422.9 536.6L425.9 532.7M532.2 534.3L535.2 535.2L538.3 536.1L541.3 537.0L544.3 537.9M319.5 537.1L322.6 534.5L325.6 532.1M392.4 532.6L395.4 536.6M422.8 536.0L425.8 531.9M319.4 533.6L322.4 530.4M395.3 528.2L398.3 532.3M422.6 535.6L425.6 531.4M319.2 530.4L322.3 526.9M401.2 528.0L404.2 532.7M425.5 531.0L428.5 526.8M319.1 527.1L322.1 523.8M404.1 523.7L407.1 528.4M425.4 530.9L428.4 526.4M315.9 527.3L319.0 524.0M428.2 526.3L431.3 521.8M315.8 524.2L318.8 520.8M412.9 520.0L416.0 525.0M315.6 521.2L318.7 517.7M415.8 515.8L418.8 520.8M431.0 522.0L434.0 517.1M315.5 518.3L318.5 514.7M421.7 516.6L424.8 521.6M315.3 515.5L318.4 511.7M424.6 512.4L427.7 517.3M433.7 518.4L436.8 512.9M315.2 512.8L318.2 509.0M436.6 513.9L439.7 508.4M315.0 510.2L318.1 506.3M433.4 508.8L436.5 513.5L439.5 509.4M311.9 511.8L314.9 507.7M436.3 504.5L439.4 509.1L442.4 504.9M311.9 511.8L314.7 505.3M315.2 512.8L318.1 506.3M315.3 515.5L318.2 509.0M315.5 518.3L318.4 511.7M315.6 521.2L318.5 514.7M315.8 524.2L318.7 517.7M315.9 527.3L318.8 520.8M316.1 530.5L319.0 524.0M319.1 527.1L322.0 520.6M319.2 530.4L322.1 523.8M319.4 533.6L322.3 526.9M319.5 537.1L322.4 530.4M322.6 534.5L325.5 527.8M322.7 538.9L325.6 532.1M325.8 536.7L328.6 530.0M325.9 541.4L328.8 534.7M328.9 539.5L331.8 532.9M329.1 544.3L332.0 537.7M332.1 542.6L335.0 536.1M335.2 541.1L338.0 534.7M335.3 546.2L338.2 539.8M338.3 544.9L341.2 538.5M341.4 543.5L344.3 537.3M341.5 548.4L344.4 542.2M344.6 547.1L347.4 541.0M347.6 546.0L350.5 539.9M347.7 551.1L350.6 545.1M350.8 550.3L353.7 544.3M353.8 549.5L356.7 543.6M356.8 549.1L359.7 543.4M359.9 549.5L362.8 544.1M362.9 550.6L365.8 545.4L368.7 540.2M368.8 547.2L371.7 542.2M374.8 544.5L377.7 539.8M380.7 542.6L383.6 538.0L386.5 533.5M386.6 541.5L389.5 537.1L392.4 532.6M395.4 536.6L398.3 532.3L401.2 528.0M407.1 528.4L410.0 524.2L412.9 520.0M418.8 520.8L421.7 516.6L424.6 512.4M427.7 517.3L430.5 513.0L433.4 508.8M439.4 509.1L442.2 504.7L445.1 500.3M436.6 513.9L439.5 509.4L442.4 504.9M431.0 522.0L433.9 517.5L436.8 512.9M428.2 526.3L431.1 521.7L434.0 517.1M425.5 531.0L428.4 526.4L431.3 521.8M422.8 536.0L425.6 531.4L428.5 526.8M420.0 541.2L422.9 536.6L425.8 531.9M420.2 542.1L423.1 537.4M417.4 548.3L420.3 543.5L423.2 538.7M417.6 550.8L420.5 545.7L423.3 540.6M420.6 548.8L423.5 543.5M420.7 553.1L423.6 547.5M423.8 552.5L426.7 546.7M426.8 552.2L429.7 546.1M429.9 552.1L432.7 545.8M432.9 552.6L435.8 546.1M435.9 553.6L438.8 546.9M439.0 554.7L441.9 547.8M444.9 548.6L447.8 541.6M447.9 549.6L450.8 542.4M451.0 550.8L453.8 543.4M454.0 552.1L456.9 544.5M463.0 546.6L465.8 538.8M466.0 547.8L468.9 539.8M469.0 549.0L471.9 540.9M472.1 550.2L475.0 542.0M484.1 545.4L487.0 537.0M487.1 546.6L490.0 538.1M490.1 547.9L493.0 539.3M502.1 543.2L505.0 534.4M505.2 544.4L508.1 535.6M508.2 545.6L511.1 536.8M520.2 540.2L523.1 531.3M523.2 541.3L526.1 532.4M526.3 542.3L529.2 533.3M529.3 543.2L532.2 534.3M544.3 537.9L547.2 528.9M547.4 538.8L550.3 529.8M550.4 539.6L553.3 530.6M553.4 540.4L556.3 531.4M556.5 541.1L559.4 532.1" stroke="#ffdf18"/>
<path d="M429.7 546.1L432.7 545.8L435.8 546.1M356.7 543.6L359.7 543.4L362.8 544.1M423.5 543.5L426.5 541.9L429.6 540.9L432.6 540.1L435.6 539.6M438.7 539.7L441.7 540.3L444.7 540.9L447.8 541.6L450.8 542.4L453.8 543.4M347.4 541.0L350.5 539.9L353.5 539.1L356.6 538.4L359.6 537.8L362.6 537.9L365.7 538.7L368.7 540.2L371.7 542.2M423.3 540.6L426.4 538.2M462.8 537.9L465.8 538.8L468.9 539.8L471.9 540.9M341.2 538.5L344.3 537.3L347.3 536.0L350.3 534.9M371.6 535.2L374.6 537.3L377.7 539.8M423.2 538.7L426.2 535.7M480.9 534.9L483.9 535.9L487.0 537.0L490.0 538.1L493.0 539.3M335.0 536.1L338.0 534.7L341.1 533.4L344.1 532.3M377.5 532.4L380.5 535.0L383.6 538.0M423.1 537.4L426.1 533.9M502.0 533.2L505.0 534.4L508.1 535.6L511.1 536.8M328.8 534.7L331.8 532.9L334.9 531.2L337.9 529.6M383.4 530.3L386.5 533.5M425.9 532.7L429.0 529.1M520.1 530.3L523.1 531.3L526.1 532.4L529.2 533.3L532.2 534.3M325.6 532.1L328.6 530.0L331.7 528.1M389.4 528.9L392.4 532.6M425.8 531.9L428.8 528.0M544.2 528.0L547.2 528.9L550.3 529.8L553.3 530.6L556.3 531.4L559.4 532.1M322.4 530.4L325.5 527.8L328.5 525.5M392.3 524.3L395.3 528.2M425.6 531.4L428.7 527.3M322.3 526.9L325.3 523.7M398.2 523.7L401.2 528.0M428.5 526.8L431.6 522.7M322.1 523.8L325.2 520.3M401.1 519.3L404.1 523.7M428.4 526.4L431.4 522.2M319.0 524.0L322.0 520.6L325.0 517.3M407.0 519.4L410.0 524.2M431.3 521.8L434.3 517.5M318.8 520.8L321.8 517.5M409.9 515.1L412.9 520.0M431.1 521.7L434.2 517.2M318.7 517.7L321.7 514.4M434.0 517.1L437.1 512.6M318.5 514.7L321.5 511.2M418.7 511.5L421.7 516.6M433.9 517.5L436.9 512.5M318.4 511.7L321.4 508.2M421.6 507.3L424.6 512.4M436.8 512.9L439.8 507.9M318.2 509.0L321.3 505.2M427.5 508.1L430.5 513.0M318.1 506.3L321.1 502.5M430.4 503.9L433.4 508.8M439.5 509.4L442.5 503.8M314.9 507.7L317.9 503.7M433.3 499.7L436.3 504.5M442.4 504.9L445.4 499.2M314.7 505.3L317.8 501.2M439.2 500.2L442.2 504.7L445.3 500.4M442.1 496.0L445.1 500.3L448.2 495.8M314.7 505.3L317.6 498.8M314.9 507.7L317.8 501.2M315.0 510.2L317.9 503.7M318.2 509.0L321.1 502.5M318.4 511.7L321.3 505.2M318.5 514.7L321.4 508.2M318.7 517.7L321.5 511.2M318.8 520.8L321.7 514.4M319.0 524.0L321.8 517.5M322.0 520.6L324.9 514.2M322.1 523.8L325.0 517.3M322.3 526.9L325.2 520.3M322.4 530.4L325.3 523.7M325.5 527.8L328.4 521.1M325.6 532.1L328.5 525.5M328.8 534.7L331.7 528.1M331.8 532.9L334.7 526.3M332.0 537.7L334.9 531.2M335.0 536.1L337.9 529.6M338.2 539.8L341.1 533.4M341.2 538.5L344.1 532.3M344.3 537.3L347.2 531.1M344.4 542.2L347.3 536.0M347.4 541.0L350.3 534.9M350.5 539.9L353.4 533.9M350.6 545.1L353.5 539.1M353.7 544.3L356.6 538.4M356.7 543.6L359.6 537.8M359.7 543.4L362.6 537.9M362.8 544.1L365.7 538.7M368.7 540.2L371.6 535.2M371.7 542.2L374.6 537.3L377.5 532.4M377.7 539.8L380.5 535.0L383.4 530.3M386.5 533.5L389.4 528.9M392.4 532.6L395.3 528.2L398.2 523.7M401.2 528.0L404.1 523.7L407.0 519.4M412.9 520.0L415.8 515.8L418.7 511.5M424.6 512.4L427.5 508.1L430.4 503.9M433.4 508.8L436.3 504.5L439.2 500.2M445.1 500.3L448.0 496.0L450.9 491.6M442.4 504.9L445.3 500.4M436.8 512.9L439.7 508.4L442.5 503.8M434.0 517.1L436.9 512.5L439.8 507.9M431.3 521.8L434.2 517.2M428.5 526.8L431.4 522.2L434.3 517.5M425.8 531.9L428.7 527.3L431.6 522.7M423.1 537.4L425.9 532.7L428.8 528.0M423.2 538.7L426.1 533.9M423.3 540.6L426.2 535.7M423.5 543.5L426.4 538.2M423.6 547.5L426.5 541.9L429.4 536.4M426.7 546.7L429.6 540.9M429.7 546.1L432.6 540.1M432.7 545.8L435.6 539.6M435.8 546.1L438.7 539.7M438.8 546.9L441.7 540.3M441.9 547.8L444.7 540.9M450.8 542.4L453.7 535.2M453.8 543.4L456.7 536.0M456.9 544.5L459.8 537.0M459.9 545.6L462.8 537.9M471.9 540.9L474.8 532.8M475.0 542.0L477.8 533.8M478.0 543.2L480.9 534.9M481.0 544.3L483.9 535.9M493.0 539.3L495.9 530.7M496.1 540.6L498.9 531.9M499.1 541.9L502.0 533.2M511.1 536.8L514.0 528.0M514.1 538.0L517.0 529.2M517.2 539.1L520.1 530.3M532.2 534.3L535.1 525.3M535.2 535.2L538.1 526.2M538.3 536.1L541.2 527.1M541.3 537.0L544.2 528.0M556.3 531.4L559.2 522.3M559.4 532.1L562.3 523.0" stroke="#ffd212"/>
<path d="M435.6 539.6L438.7 539.7M426.4 538.2L429.4 536.4L432.5 535.1L435.5 534.1L438.5 533.4M441.6 533.3L444.6 533.7L447.6 534.1L450.7 534.6L453.7 535.2L456.7 536.0L459.8 537.0L462.8 537.9M350.3 534.9L353.4 533.9L356.4 533.1L359.4 532.5L362.5 532.2L365.5 532.5L368.6 533.5L371.6 535.2M426.2 535.7L429.3 533.0L432.3 531.0M468.7 531.0L471.8 531.8L474.8 532.8L477.8 533.8L480.9 534.9M344.1 532.3L347.2 531.1L350.2 529.9L353.2 528.8M371.4 528.3L374.5 530.1L377.5 532.4M426.1 533.9L429.1 530.7L432.2 527.9M489.8 528.5L492.9 529.6L495.9 530.7L498.9 531.9L502.0 533.2M337.9 529.6L340.9 528.3L344.0 527.1L347.0 526.0M380.4 527.6L383.4 530.3M429.0 529.1L432.0 525.8M510.9 526.9L514.0 528.0L517.0 529.2L520.1 530.3M331.7 528.1L334.7 526.3L337.8 524.7M383.3 522.7L386.3 525.6L389.4 528.9M428.8 528.0L431.9 524.3M532.0 524.3L535.1 525.3L538.1 526.2L541.2 527.1L544.2 528.0M328.5 525.5L331.5 523.4L334.6 521.6M389.2 520.9L392.3 524.3M428.7 527.3L431.7 523.3M556.2 521.5L559.2 522.3L562.3 523.0M325.3 523.7L328.4 521.1L331.4 518.9M395.1 519.8L398.2 523.7M431.6 522.7L434.6 518.7M325.2 520.3L328.2 517.0M398.0 515.2L401.1 519.3M431.4 522.2L434.5 518.0M325.0 517.3L328.1 513.7M404.0 514.8L407.0 519.4M434.3 517.5L437.4 513.4M321.8 517.5L324.9 514.2L327.9 510.9M406.8 510.4L409.9 515.1M434.2 517.2L437.2 512.9M321.7 514.4L324.7 511.1M412.8 510.7L415.8 515.8M437.1 512.6L440.1 508.3M321.5 511.2L324.6 507.9M415.7 506.4L418.7 511.5M436.9 512.5L439.9 508.0M321.4 508.2L324.4 504.8M439.8 507.9L442.8 503.4M321.3 505.2L324.3 501.7M424.5 503.1L427.5 508.1M439.7 508.4L442.7 503.3M321.1 502.5L324.1 498.8M427.4 498.8L430.4 503.9M442.5 503.8L445.6 498.7M317.9 503.7L321.0 499.8M317.8 501.2L320.8 497.2M436.2 495.5L439.2 500.2M445.3 500.4L448.3 494.6M317.6 498.8L320.7 494.7M439.1 491.3L442.1 496.0M445.0 491.7L448.0 496.0L451.1 491.3M447.9 487.4L450.9 491.6L454.0 486.8M317.6 498.8L320.5 492.3M317.8 501.2L320.7 494.7M317.9 503.7L320.8 497.2M318.1 506.3L321.0 499.8M321.1 502.5L324.0 496.0M321.3 505.2L324.1 498.8M321.4 508.2L324.3 501.7M321.5 511.2L324.4 504.8M321.7 514.4L324.6 507.9M321.8 517.5L324.7 511.1M325.0 517.3L327.9 510.9M325.2 520.3L328.1 513.7M325.3 523.7L328.2 517.0M328.5 525.5L331.4 518.9M328.6 530.0L331.5 523.4M331.7 528.1L334.6 521.6M334.7 526.3L337.6 519.9M334.9 531.2L337.8 524.7M337.9 529.6L340.8 523.3M338.0 534.7L340.9 528.3M341.1 533.4L344.0 527.1M344.1 532.3L347.0 526.0M347.2 531.1L350.0 524.9M347.3 536.0L350.2 529.9M350.3 534.9L353.2 528.8M353.4 533.9L356.3 527.9M353.5 539.1L356.4 533.1L359.3 527.2M356.6 538.4L359.4 532.5M359.6 537.8L362.5 532.2M362.6 537.9L365.5 532.5M365.7 538.7L368.6 533.5L371.4 528.3M371.6 535.2L374.5 530.1L377.4 525.1M377.5 532.4L380.4 527.6M383.4 530.3L386.3 525.6L389.2 520.9M389.4 528.9L392.3 524.3L395.1 519.8M398.2 523.7L401.1 519.3L404.0 514.8M407.0 519.4L409.9 515.1L412.8 510.7M418.7 511.5L421.6 507.3L424.5 503.1M430.4 503.9L433.3 499.7L436.2 495.5M439.2 500.2L442.1 496.0L445.0 491.7M450.9 491.6L453.8 487.2M445.3 500.4L448.2 495.8L451.1 491.3M442.5 503.8L445.4 499.2L448.3 494.6M439.8 507.9L442.7 503.3M434.2 517.2L437.1 512.6L439.9 508.0M434.3 517.5L437.2 512.9M431.6 522.7L434.5 518.0M428.8 528.0L431.7 523.3L434.6 518.7M426.1 533.9L429.0 529.1L431.9 524.3M426.2 535.7L429.1 530.7L432.0 525.8M426.4 538.2L429.3 533.0L432.2 527.9M429.4 536.4L432.3 531.0M429.6 540.9L432.5 535.1M432.6 540.1L435.5 534.1M435.6 539.6L438.5 533.4M438.7 539.7L441.6 533.3M441.7 540.3L444.6 533.7M444.7 540.9L447.6 534.1M447.8 541.6L450.7 534.6M456.7 536.0L459.6 528.7M459.8 537.0L462.7 529.5M462.8 537.9L465.7 530.2M465.8 538.8L468.7 531.0M468.9 539.8L471.8 531.8M480.9 534.9L483.8 526.6M483.9 535.9L486.8 527.5M487.0 537.0L489.8 528.5M490.0 538.1L492.9 529.6M498.9 531.9L501.8 523.3M502.0 533.2L504.9 524.5M505.0 534.4L507.9 525.7M508.1 535.6L510.9 526.9M520.1 530.3L522.9 521.4M523.1 531.3L526.0 522.4M526.1 532.4L529.0 523.4M529.2 533.3L532.0 524.3M544.2 528.0L547.1 518.9M547.2 528.9L550.1 519.8M550.3 529.8L553.2 520.7M553.3 530.6L556.2 521.5" stroke="#ffc40d"/>
<path d="M438.5 533.4L441.6 533.3M432.3 531.0L435.3 529.5L438.4 528.2L441.4 527.3M447.5 527.1L450.5 527.4L453.6 527.6L456.6 528.0L459.6 528.7L462.7 529.5L465.7 530.2L468.7 531.0M353.2 528.8L356.3 527.9L359.3 527.2L362.3 526.7L365.4 526.6L368.4 527.1L371.4 528.3M432.2 527.9L435.2 525.7M477.7 524.7L480.7 525.7L483.8 526.6L486.8 527.5L489.8 528.5M347.0 526.0L350.0 524.9L353.1 523.8L356.1 522.8M371.3 521.9L374.3 523.2L377.4 525.1L380.4 527.6M432.0 525.8L435.0 522.9M498.8 522.1L501.8 523.3L504.9 524.5L507.9 525.7L510.9 526.9M337.8 524.7L340.8 523.3L343.8 522.0L346.9 520.9L349.9 519.8M380.3 520.2L383.3 522.7M431.9 524.3L434.9 520.9M519.9 520.3L522.9 521.4L526.0 522.4L529.0 523.4L532.0 524.3M334.6 521.6L337.6 519.9L340.6 518.3M386.2 517.9L389.2 520.9M431.7 523.3L434.8 519.6L437.8 516.1M544.0 518.0L547.1 518.9L550.1 519.8L553.2 520.7L556.2 521.5M331.4 518.9L334.4 516.9L337.5 515.1M392.1 516.2L395.1 519.8M434.6 518.7L437.6 514.9M328.2 517.0L331.2 514.5L334.3 512.3M395.0 511.6L398.0 515.2M434.5 518.0L437.5 514.0M328.1 513.7L331.1 510.4M400.9 510.7L404.0 514.8M437.4 513.4L440.4 509.3M327.9 510.9L330.9 507.2M403.8 506.1L406.8 510.4M437.2 512.9L440.2 508.8M324.7 511.1L327.8 507.8L330.8 504.5M409.7 506.0L412.8 510.7M440.1 508.3L443.1 504.1M324.6 507.9L327.6 504.7M412.6 501.5L415.7 506.4M439.9 508.0L443.0 503.7M324.4 504.8L327.5 501.6M418.5 502.1L421.6 507.3M442.8 503.4L445.9 499.0M324.3 501.7L327.3 498.4M421.4 497.8L424.5 503.1M442.7 503.3L445.7 498.7M324.1 498.8L327.2 495.3M445.6 498.7L448.6 494.1M321.0 499.8L324.0 496.0L327.0 492.3M430.3 494.6L433.3 499.7M445.4 499.2L448.5 494.1M320.8 497.2L323.9 493.3M433.1 490.4L436.2 495.5M448.3 494.6L451.4 489.4M320.7 494.7L323.7 490.7M448.2 495.8L451.2 490.0M320.5 492.3L323.6 488.3M442.0 487.1L445.0 491.7M451.1 491.3L454.1 485.4M444.8 482.8L447.9 487.4M450.8 483.1L453.8 487.2L456.8 482.3M320.5 492.3L323.4 485.8M320.7 494.7L323.6 488.3M320.8 497.2L323.7 490.7M321.0 499.8L323.9 493.3M324.1 498.8L327.0 492.3M324.3 501.7L327.2 495.3M324.4 504.8L327.3 498.4M324.6 507.9L327.5 501.6M324.7 511.1L327.6 504.7M324.9 514.2L327.8 507.8M327.9 510.9L330.8 504.5M328.1 513.7L330.9 507.2M328.2 517.0L331.1 510.4M328.4 521.1L331.2 514.5M331.4 518.9L334.3 512.3M331.5 523.4L334.4 516.9M334.6 521.6L337.5 515.1M337.6 519.9L340.5 513.4M337.8 524.7L340.6 518.3M340.8 523.3L343.7 516.9M340.9 528.3L343.8 522.0M344.0 527.1L346.9 520.9M347.0 526.0L349.9 519.8M350.0 524.9L352.9 518.8M350.2 529.9L353.1 523.8M353.2 528.8L356.1 522.8M356.3 527.9L359.2 522.0M359.3 527.2L362.2 521.3M359.4 532.5L362.3 526.7L365.2 521.0M362.5 532.2L365.4 526.6L368.3 521.2M365.5 532.5L368.4 527.1L371.3 521.9M371.4 528.3L374.3 523.2M377.4 525.1L380.3 520.2M380.4 527.6L383.3 522.7L386.2 517.9M389.2 520.9L392.1 516.2M395.1 519.8L398.0 515.2L400.9 510.7M404.0 514.8L406.8 510.4L409.7 506.0M412.8 510.7L415.7 506.4L418.5 502.1L421.4 497.8M424.5 503.1L427.4 498.8L430.3 494.6M436.2 495.5L439.1 491.3L442.0 487.1M445.0 491.7L447.9 487.4L450.8 483.1M451.1 491.3L454.0 486.8L456.8 482.3M448.3 494.6L451.2 490.0M442.7 503.3L445.6 498.7L448.5 494.1M439.9 508.0L442.8 503.4L445.7 498.7M437.2 512.9L440.1 508.3L443.0 503.7M434.5 518.0L437.4 513.4L440.2 508.8M434.6 518.7L437.5 514.0M431.9 524.3L434.8 519.6L437.6 514.9M432.0 525.8L434.9 520.9M432.2 527.9L435.0 522.9M432.3 531.0L435.2 525.7M432.5 535.1L435.3 529.5L438.2 523.9M435.5 534.1L438.4 528.2M438.5 533.4L441.4 527.3M441.6 533.3L444.4 526.9M444.6 533.7L447.5 527.1M447.6 534.1L450.5 527.4M450.7 534.6L453.6 527.6M453.7 535.2L456.6 528.0M465.7 530.2L468.6 522.6M468.7 531.0L471.6 523.2M471.8 531.8L474.7 523.9M474.8 532.8L477.7 524.7M477.8 533.8L480.7 525.7M489.8 528.5L492.7 520.1M492.9 529.6L495.8 521.1M495.9 530.7L498.8 522.1M507.9 525.7L510.8 517.0M510.9 526.9L513.8 518.1M514.0 528.0L516.9 519.2M517.0 529.2L519.9 520.3M529.0 523.4L531.9 514.4M532.0 524.3L534.9 515.3M535.1 525.3L538.0 516.2M538.1 526.2L541.0 517.1M541.2 527.1L544.0 518.0M556.2 521.5L559.1 512.4M559.2 522.3L562.1 513.2M562.3 523.0L565.2 514.0" stroke="#ffb508"/>
<path d="M441.4 527.3L444.4 526.9L447.5 527.1M435.2 525.7L438.2 523.9L441.3 522.4L444.3 521.2L447.3 520.6M459.5 520.9L462.5 521.4L465.6 522.0L468.6 522.6L471.6 523.2L474.7 523.9L477.7 524.7M356.1 522.8L359.2 522.0L362.2 521.3L365.2 521.0L368.3 521.2L371.3 521.9M435.0 522.9L438.1 520.4L441.1 518.3M486.7 518.4L489.7 519.2L492.7 520.1L495.8 521.1L498.8 522.1M349.9 519.8L352.9 518.8L356.0 517.8L359.0 516.8L362.0 516.0M371.1 515.8L374.2 516.6L377.2 518.1L380.3 520.2M434.9 520.9L437.9 517.8L441.0 515.2M507.8 515.8L510.8 517.0L513.8 518.1L516.9 519.2L519.9 520.3M340.6 518.3L343.7 516.9L346.7 515.7L349.7 514.7L352.8 513.7M380.1 513.1L383.1 515.2L386.2 517.9M437.8 516.1L440.8 512.9M528.9 513.5L531.9 514.4L534.9 515.3L538.0 516.2L541.0 517.1L544.0 518.0M337.5 515.1L340.5 513.4L343.5 511.9M386.0 510.3L389.1 513.1L392.1 516.2M437.6 514.9L440.7 511.3M556.0 511.6L559.1 512.4L562.1 513.2L565.2 514.0M334.3 512.3L337.3 510.4L340.3 508.7M392.0 508.3L395.0 511.6M437.5 514.0L440.5 510.2M331.1 510.4L334.1 508.0L337.2 505.8M397.9 506.9L400.9 510.7M440.4 509.3L443.4 505.5M330.9 507.2L334.0 503.9M440.2 508.8L443.3 504.7M330.8 504.5L333.8 500.8M406.7 501.6L409.7 506.0M443.1 504.1L446.2 500.0M327.6 504.7L330.7 501.4L333.7 498.1M443.0 503.7L446.0 499.5M327.5 501.6L330.5 498.3M415.5 497.1L418.5 502.1M327.3 498.4L330.4 495.2M418.4 492.7L421.4 497.8M445.7 498.7L448.8 494.4M327.2 495.3L330.2 492.1M424.3 493.5L427.4 498.8M327.0 492.3L330.1 489.0M427.2 489.2L430.3 494.6M448.5 494.1L451.5 489.5M323.9 493.3L326.9 489.6L329.9 486.0M323.7 490.7L326.7 486.9M436.0 486.1L439.1 491.3M451.2 490.0L454.2 484.8M323.6 488.3L326.6 484.3M438.9 481.9L442.0 487.1M323.4 485.8L326.4 481.8M454.0 486.8L457.0 480.7M447.7 478.6L450.8 483.1M456.8 482.3L459.9 476.1M323.4 485.8L326.3 479.4M323.6 488.3L326.4 481.8M323.7 490.7L326.6 484.3M323.9 493.3L326.7 486.9M324.0 496.0L326.9 489.6M327.0 492.3L329.9 486.0M327.2 495.3L330.1 489.0M327.3 498.4L330.2 492.1M327.5 501.6L330.4 495.2M327.6 504.7L330.5 498.3M327.8 507.8L330.7 501.4M330.8 504.5L333.7 498.1M330.9 507.2L333.8 500.8M331.1 510.4L334.0 503.9M331.2 514.5L334.1 508.0M334.3 512.3L337.2 505.8M334.4 516.9L337.3 510.4M337.5 515.1L340.3 508.7M340.5 513.4L343.4 507.1M340.6 518.3L343.5 511.9M343.7 516.9L346.6 510.6M343.8 522.0L346.7 515.7L349.6 509.5M346.9 520.9L349.7 514.7M349.9 519.8L352.8 513.7M352.9 518.8L355.8 512.7M353.1 523.8L356.0 517.8M356.1 522.8L359.0 516.8M359.2 522.0L362.0 516.0M362.2 521.3L365.1 515.5M365.2 521.0L368.1 515.4M368.3 521.2L371.1 515.8M371.3 521.9L374.2 516.6M374.3 523.2L377.2 518.1L380.1 513.1M380.3 520.2L383.1 515.2L386.0 510.3M386.2 517.9L389.1 513.1L392.0 508.3M392.1 516.2L395.0 511.6L397.9 506.9M400.9 510.7L403.8 506.1L406.7 501.6M409.7 506.0L412.6 501.5L415.5 497.1M421.4 497.8L424.3 493.5L427.2 489.2M430.3 494.6L433.1 490.4L436.0 486.1M442.0 487.1L444.8 482.8L447.7 478.6M451.2 490.0L454.1 485.4L457.0 480.7M448.5 494.1L451.4 489.4L454.2 484.8M445.7 498.7L448.6 494.1L451.5 489.5M443.0 503.7L445.9 499.0L448.8 494.4M440.2 508.8L443.1 504.1L446.0 499.5M437.5 514.0L440.4 509.3L443.3 504.7M437.6 514.9L440.5 510.2M434.9 520.9L437.8 516.1L440.7 511.3M435.0 522.9L437.9 517.8L440.8 512.9M435.2 525.7L438.1 520.4L441.0 515.2M438.2 523.9L441.1 518.3M438.4 528.2L441.3 522.4M441.4 527.3L444.3 521.2M444.4 526.9L447.3 520.6M447.5 527.1L450.4 520.6M450.5 527.4L453.4 520.6M453.6 527.6L456.4 520.7M456.6 528.0L459.5 520.9M459.6 528.7L462.5 521.4M462.7 529.5L465.6 522.0M474.7 523.9L477.5 516.0M477.7 524.7L480.6 516.7M480.7 525.7L483.6 517.5M483.8 526.6L486.7 518.4M486.8 527.5L489.7 519.2M498.8 522.1L501.7 513.6M501.8 523.3L504.7 514.7M504.9 524.5L507.8 515.8M519.9 520.3L522.8 511.5M522.9 521.4L525.8 512.5M526.0 522.4L528.9 513.5M541.0 517.1L543.9 508.1M544.0 518.0L546.9 508.9M547.1 518.9L550.0 509.8M550.1 519.8L553.0 510.7M553.2 520.7L556.0 511.6" stroke="#ffa703"/>
<path d="M447.3 520.6L450.4 520.6L453.4 520.6L456.4 520.7L459.5 520.9M441.1 518.3L444.2 516.6L447.2 515.2L450.2 514.4M468.4 514.5L471.5 515.0L474.5 515.4L477.5 516.0L480.6 516.7L483.6 517.5L486.7 518.4M362.0 516.0L365.1 515.5L368.1 515.4L371.1 515.8M441.0 515.2L444.0 512.9M498.7 512.6L501.7 513.6L504.7 514.7L507.8 515.8M352.8 513.7L355.8 512.7L358.9 511.8L361.9 510.9L364.9 510.1L368.0 509.8L371.0 509.9L374.0 510.4L377.1 511.5L380.1 513.1M440.8 512.9L443.9 510.0M516.7 509.4L519.8 510.4L522.8 511.5L525.8 512.5L528.9 513.5M343.5 511.9L346.6 510.6L349.6 509.5L352.6 508.5L355.7 507.6M383.0 508.1L386.0 510.3M440.7 511.3L443.7 508.0M540.9 507.2L543.9 508.1L546.9 508.9L550.0 509.8L553.0 510.7L556.0 511.6M340.3 508.7L343.4 507.1L346.4 505.6M388.9 505.4L392.0 508.3M440.5 510.2L443.6 506.5M337.2 505.8L340.2 503.9L343.2 502.3M394.8 503.5L397.9 506.9M443.4 505.5L446.5 501.8M334.0 503.9L337.0 501.4L340.1 499.3M397.7 498.7L400.8 502.3L403.8 506.1M443.3 504.7L446.3 500.8M333.8 500.8L336.9 497.4M403.7 497.6L406.7 501.6M446.2 500.0L449.2 496.1M333.7 498.1L336.7 494.4M409.6 497.1L412.6 501.5M446.0 499.5L449.1 495.4M330.5 498.3L333.5 495.1L336.6 491.8M412.5 492.5L415.5 497.1M445.9 499.0L448.9 494.9M330.4 495.2L333.4 492.1M448.8 494.4L451.8 490.3M330.2 492.1L333.3 488.9M421.3 488.2L424.3 493.5M448.6 494.1L451.7 489.8M330.1 489.0L333.1 485.8M424.2 483.8L427.2 489.2M451.5 489.5L454.5 485.2M329.9 486.0L333.0 482.6M430.1 484.8L433.1 490.4M451.4 489.4L454.4 484.8M326.7 486.9L329.8 483.2M433.0 480.5L436.0 486.1M454.2 484.8L457.3 480.2M326.6 484.3L329.6 480.5M435.9 476.2L438.9 481.9M454.1 485.4L457.1 480.1M326.4 481.8L329.5 477.9M441.8 477.7L444.8 482.8M457.0 480.7L460.0 475.5M326.3 479.4L329.3 475.4M444.7 473.4L447.7 478.6M326.4 481.8L329.3 475.4M326.6 484.3L329.5 477.9M326.7 486.9L329.6 480.5M326.9 489.6L329.8 483.2M329.9 486.0L332.8 479.6M330.1 489.0L333.0 482.6M330.2 492.1L333.1 485.8M330.4 495.2L333.3 488.9M330.5 498.3L333.4 492.1M330.7 501.4L333.5 495.1M333.7 498.1L336.6 491.8M333.8 500.8L336.7 494.4M334.0 503.9L336.9 497.4M334.1 508.0L337.0 501.4M337.2 505.8L340.1 499.3M337.3 510.4L340.2 503.9M340.3 508.7L343.2 502.3M343.4 507.1L346.3 500.7M343.5 511.9L346.4 505.6M346.6 510.6L349.5 504.3M349.6 509.5L352.5 503.2M349.7 514.7L352.6 508.5M352.8 513.7L355.7 507.6M355.8 512.7L358.7 506.6M356.0 517.8L358.9 511.8L361.7 505.7M359.0 516.8L361.9 510.9M362.0 516.0L364.9 510.1M365.1 515.5L368.0 509.8M368.1 515.4L371.0 509.9M371.1 515.8L374.0 510.4M374.2 516.6L377.1 511.5L380.0 506.3M380.1 513.1L383.0 508.1M386.0 510.3L388.9 505.4M392.0 508.3L394.8 503.5M397.9 506.9L400.8 502.3L403.7 497.6M406.7 501.6L409.6 497.1L412.5 492.5M415.5 497.1L418.4 492.7L421.3 488.2M427.2 489.2L430.1 484.8L433.0 480.5M436.0 486.1L438.9 481.9L441.8 477.7L444.7 473.4M457.0 480.7L459.9 476.1M454.2 484.8L457.1 480.1M451.5 489.5L454.4 484.8M448.8 494.4L451.7 489.8L454.5 485.2M446.0 499.5L448.9 494.9L451.8 490.3M443.3 504.7L446.2 500.0L449.1 495.4M440.5 510.2L443.4 505.5L446.3 500.8M440.7 511.3L443.6 506.5L446.5 501.8M440.8 512.9L443.7 508.0M441.0 515.2L443.9 510.0M441.1 518.3L444.0 512.9M441.3 522.4L444.2 516.6L447.0 510.9M444.3 521.2L447.2 515.2M447.3 520.6L450.2 514.4M450.4 520.6L453.3 514.1M453.4 520.6L456.3 513.9M456.4 520.7L459.3 513.8M459.5 520.9L462.4 513.8M462.5 521.4L465.4 514.1M465.6 522.0L468.4 514.5M468.6 522.6L471.5 515.0M471.6 523.2L474.5 515.4M483.6 517.5L486.5 509.4M486.7 518.4L489.5 510.2M489.7 519.2L492.6 510.9M492.7 520.1L495.6 511.7M495.8 521.1L498.7 512.6M507.8 515.8L510.7 507.2M510.8 517.0L513.7 508.3M513.8 518.1L516.7 509.4M516.9 519.2L519.8 510.4M528.9 513.5L531.8 504.6M531.9 514.4L534.8 505.5M534.9 515.3L537.8 506.3M538.0 516.2L540.9 507.2M556.0 511.6L558.9 502.5M559.1 512.4L562.0 503.3M562.1 513.2L565.0 504.1M565.2 514.0L568.0 504.8" stroke="#ff9700"/>
<path d="M450.2 514.4L453.3 514.1L456.3 513.9L459.3 513.8L462.4 513.8L465.4 514.1L468.4 514.5M444.0 512.9L447.0 510.9L450.1 509.2L453.1 508.2M480.4 508.2L483.5 508.7L486.5 509.4L489.5 510.2L492.6 510.9L495.6 511.7L498.7 512.6M443.9 510.0L446.9 507.5L449.9 505.3M507.6 506.1L510.7 507.2L513.7 508.3L516.7 509.4M355.7 507.6L358.7 506.6L361.7 505.7L364.8 504.9L367.8 504.3L370.9 504.2L373.9 504.5L376.9 505.2L380.0 506.3L383.0 508.1M443.7 508.0L446.8 505.0L449.8 502.2M528.7 503.6L531.8 504.6L534.8 505.5L537.8 506.3L540.9 507.2M346.4 505.6L349.5 504.3L352.5 503.2L355.5 502.3L358.6 501.4M382.9 501.3L385.9 503.1L388.9 505.4M443.6 506.5L446.6 503.1L449.6 499.9M552.9 500.7L555.9 501.6L558.9 502.5L562.0 503.3L565.0 504.1L568.0 504.8M343.2 502.3L346.3 500.7L349.3 499.3M388.8 498.1L391.8 500.5L394.8 503.5M446.5 501.8L449.5 498.2M340.1 499.3L343.1 497.5L346.1 495.9M394.7 495.6L397.7 498.7M446.3 500.8L449.3 497.0M336.9 497.4L339.9 495.0M400.6 493.9L403.7 497.6M449.2 496.1L452.2 492.3M336.7 494.4L339.8 490.9M406.6 492.9L409.6 497.1M449.1 495.4L452.1 491.5M336.6 491.8L339.6 488.0M409.4 488.3L412.5 492.5M448.9 494.9L451.9 490.8M333.4 492.1L336.4 488.9L339.5 485.5M415.4 488.0L418.4 492.7M451.8 490.3L454.8 486.2M333.3 488.9L336.3 485.8M418.3 483.4L421.3 488.2M451.7 489.8L454.7 485.7M333.1 485.8L336.1 482.7M454.5 485.2L457.6 481.0M333.0 482.6L336.0 479.5M427.1 479.4L430.1 484.8M454.4 484.8L457.4 480.5M329.8 483.2L332.8 479.6L335.8 476.3M430.0 474.9L433.0 480.5M457.3 480.2L460.3 475.9M329.6 480.5L332.7 476.8M457.1 480.1L460.2 475.5M329.5 477.9L332.5 474.1M438.8 471.9L441.8 477.7M460.0 475.5L463.1 470.8M329.3 475.4L332.4 471.5M441.7 467.6L444.7 473.4M459.9 476.1L462.9 470.8M329.5 477.9L332.4 471.5M329.6 480.5L332.5 474.1M329.8 483.2L332.7 476.8M332.8 479.6L335.7 473.3M333.0 482.6L335.8 476.3M333.1 485.8L336.0 479.5M333.3 488.9L336.1 482.7M333.4 492.1L336.3 485.8M333.5 495.1L336.4 488.9L339.3 482.6M336.6 491.8L339.5 485.5M336.7 494.4L339.6 488.0M336.9 497.4L339.8 490.9M337.0 501.4L339.9 495.0M340.1 499.3L342.9 492.9M340.2 503.9L343.1 497.5M343.2 502.3L346.1 495.9M346.4 505.6L349.3 499.3M349.5 504.3L352.3 498.1M352.5 503.2L355.4 497.0M352.6 508.5L355.5 502.3M355.7 507.6L358.6 501.4M358.7 506.6L361.6 500.6M361.7 505.7L364.6 499.8M361.9 510.9L364.8 504.9M364.9 510.1L367.8 504.3M368.0 509.8L370.9 504.2M371.0 509.9L373.9 504.5M374.0 510.4L376.9 505.2L379.8 500.0M380.0 506.3L382.9 501.3M383.0 508.1L385.9 503.1L388.8 498.1M388.9 505.4L391.8 500.5L394.7 495.6M394.8 503.5L397.7 498.7L400.6 493.9M403.7 497.6L406.6 492.9L409.4 488.3M412.5 492.5L415.4 488.0M421.3 488.2L424.2 483.8L427.1 479.4M433.0 480.5L435.9 476.2L438.8 471.9M457.1 480.1L460.0 475.5L462.9 470.8M454.4 484.8L457.3 480.2L460.2 475.5M454.5 485.2L457.4 480.5M451.8 490.3L454.7 485.7M449.1 495.4L451.9 490.8L454.8 486.2M446.3 500.8L449.2 496.1L452.1 491.5M446.5 501.8L449.3 497.0M443.7 508.0L446.6 503.1L449.5 498.2M443.9 510.0L446.8 505.0L449.6 499.9M444.0 512.9L446.9 507.5L449.8 502.2M447.0 510.9L449.9 505.3M447.2 515.2L450.1 509.2M450.2 514.4L453.1 508.2M453.3 514.1L456.2 507.7M456.3 513.9L459.2 507.3M459.3 513.8L462.2 506.9M462.4 513.8L465.3 506.8M465.4 514.1L468.3 506.9M468.4 514.5L471.3 507.1M471.5 515.0L474.4 507.4M474.5 515.4L477.4 507.7M477.5 516.0L480.4 508.2M480.6 516.7L483.5 508.7M495.6 511.7L498.5 503.3M498.7 512.6L501.5 504.1M501.7 513.6L504.6 505.0M504.7 514.7L507.6 506.1M516.7 509.4L519.6 500.6M519.8 510.4L522.6 501.6M522.8 511.5L525.7 502.6M525.8 512.5L528.7 503.6M540.9 507.2L543.8 498.1M543.9 508.1L546.8 499.0M546.9 508.9L549.8 499.9M550.0 509.8L552.9 500.7M553.0 510.7L555.9 501.6M568.0 504.8L570.9 495.7" stroke="#ff8400"/>
<path d="M453.1 508.2L456.2 507.7L459.2 507.3L462.2 506.9L465.3 506.8L468.3 506.9L471.3 507.1L474.4 507.4L477.4 507.7L480.4 508.2M449.9 505.3L453.0 503.4L456.0 502.1M492.4 502.0L495.5 502.6L498.5 503.3L501.5 504.1L504.6 505.0L507.6 506.1M449.8 502.2L452.8 499.7M516.6 499.6L519.6 500.6L522.6 501.6L525.7 502.6L528.7 503.6M358.6 501.4L361.6 500.6L364.6 499.8L367.7 499.0L370.7 498.6L373.7 498.6L376.8 499.1L379.8 500.0L382.9 501.3M449.6 499.9L452.7 497.0M540.7 497.3L543.8 498.1L546.8 499.0L549.8 499.9L552.9 500.7M349.3 499.3L352.3 498.1L355.4 497.0L358.4 496.2L361.5 495.4L364.5 494.6M382.7 494.8L385.7 496.2L388.8 498.1M449.5 498.2L452.5 495.0M567.9 495.0L570.9 495.7M346.1 495.9L349.2 494.4L352.2 493.0L355.2 491.9M391.7 493.1L394.7 495.6M449.3 497.0L452.4 493.4M339.9 495.0L342.9 492.9L346.0 491.1L349.0 489.5M397.6 490.8L400.6 493.9M452.2 492.3L455.3 488.7M339.8 490.9L342.8 488.5M403.5 489.2L406.6 492.9M452.1 491.5L455.1 487.7M339.6 488.0L342.7 484.5M406.4 484.4L409.4 488.3M451.9 490.8L455.0 486.8M339.5 485.5L342.5 481.7M412.3 483.6L415.4 488.0M454.8 486.2L457.9 482.2M336.3 485.8L339.3 482.6L342.4 479.3M415.2 479.0L418.3 483.4M454.7 485.7L457.7 481.6M336.1 482.7L339.2 479.6M421.1 478.9L424.2 483.8M457.6 481.0L460.6 477.0M336.0 479.5L339.0 476.5M424.0 474.3L427.1 479.4M457.4 480.5L460.5 476.4M335.8 476.3L338.9 473.3M460.3 475.9L463.4 471.8M332.7 476.8L335.7 473.3L338.7 470.1M432.8 470.5L435.9 476.2M460.2 475.5L463.2 471.3M332.5 474.1L335.6 470.5M435.7 466.0L438.8 471.9M332.4 471.5L335.4 467.7M462.9 470.8L466.0 466.2M332.5 474.1L335.4 467.7M332.7 476.8L335.6 470.5M335.7 473.3L338.6 467.0M335.8 476.3L338.7 470.1M336.0 479.5L338.9 473.3M336.1 482.7L339.0 476.5M336.3 485.8L339.2 479.6M339.3 482.6L342.2 476.5M339.5 485.5L342.4 479.3M339.6 488.0L342.5 481.7M339.8 490.9L342.7 484.5M339.9 495.0L342.8 488.5M342.9 492.9L345.8 486.5M343.1 497.5L346.0 491.1M346.1 495.9L349.0 489.5M346.3 500.7L349.2 494.4L352.1 488.1M349.3 499.3L352.2 493.0M352.3 498.1L355.2 491.9M355.4 497.0L358.3 490.9M355.5 502.3L358.4 496.2M358.6 501.4L361.5 495.4M361.6 500.6L364.5 494.6M364.6 499.8L367.5 493.8M364.8 504.9L367.7 499.0L370.6 493.1M367.8 504.3L370.7 498.6M370.9 504.2L373.7 498.6M373.9 504.5L376.8 499.1L379.7 493.8M379.8 500.0L382.7 494.8M382.9 501.3L385.7 496.2L388.6 491.1M388.8 498.1L391.7 493.1M394.7 495.6L397.6 490.8M400.6 493.9L403.5 489.2L406.4 484.4M409.4 488.3L412.3 483.6M415.4 488.0L418.3 483.4L421.1 478.9M427.1 479.4L430.0 474.9L432.8 470.5M438.8 471.9L441.7 467.6M460.2 475.5L463.1 470.8L466.0 466.2M457.4 480.5L460.3 475.9L463.2 471.3M454.7 485.7L457.6 481.0L460.5 476.4M454.8 486.2L457.7 481.6M452.1 491.5L455.0 486.8L457.9 482.2M449.3 497.0L452.2 492.3L455.1 487.7M449.5 498.2L452.4 493.4M449.6 499.9L452.5 495.0M449.8 502.2L452.7 497.0M449.9 505.3L452.8 499.7M450.1 509.2L453.0 503.4M453.1 508.2L456.0 502.1M456.2 507.7L459.0 501.3M459.2 507.3L462.1 500.7M462.2 506.9L465.1 500.1M465.3 506.8L468.1 499.8M468.3 506.9L471.2 499.7M471.3 507.1L474.2 499.8M474.4 507.4L477.3 499.9M477.4 507.7L480.3 500.1M480.4 508.2L483.3 500.4M483.5 508.7L486.4 500.8M486.5 509.4L489.4 501.4M489.5 510.2L492.4 502.0M492.6 510.9L495.5 502.6M504.6 505.0L507.5 496.5M507.6 506.1L510.5 497.5M510.7 507.2L513.5 498.6M513.7 508.3L516.6 499.6M528.7 503.6L531.6 494.7M531.8 504.6L534.6 495.7M534.8 505.5L537.7 496.5M537.8 506.3L540.7 497.3M552.9 500.7L555.7 491.6M555.9 501.6L558.8 492.5M558.9 502.5L561.8 493.4M562.0 503.3L564.9 494.2M565.0 504.1L567.9 495.0" stroke="#ff7200"/>
<path d="M456.0 502.1L459.0 501.3L462.1 500.7L465.1 500.1L468.1 499.8L471.2 499.7L474.2 499.8L477.3 499.9L480.3 500.1L483.3 500.4L486.4 500.8L489.4 501.4L492.4 502.0M452.8 499.7L455.9 497.6L458.9 496.0M504.4 495.7L507.5 496.5L510.5 497.5L513.5 498.6L516.6 499.6M452.7 497.0L455.7 494.3M525.5 492.9L528.6 493.8L531.6 494.7L534.6 495.7L537.7 496.5L540.7 497.3M364.5 494.6L367.5 493.8L370.6 493.1L373.6 492.9L376.6 493.2L379.7 493.8L382.7 494.8M452.5 495.0L455.6 491.8M552.7 490.8L555.7 491.6L558.8 492.5L561.8 493.4L564.9 494.2L567.9 495.0M355.2 491.9L358.3 490.9L361.3 490.0L364.3 489.3L367.4 488.5M382.6 488.5L385.6 489.6L388.6 491.1L391.7 493.1M452.4 493.4L455.4 490.0M349.0 489.5L352.1 488.1L355.1 486.8L358.1 485.7M391.5 486.1L394.6 488.2L397.6 490.8M455.3 488.7L458.3 485.2M342.8 488.5L345.8 486.5L348.9 484.7L351.9 483.2M397.4 483.3L400.5 485.9L403.5 489.2M455.1 487.7L458.2 484.0M342.7 484.5L345.7 482.1M403.4 481.0L406.4 484.4M455.0 486.8L458.0 483.0M342.5 481.7L345.5 478.0M409.3 479.6L412.3 483.6M457.9 482.2L460.9 478.4M342.4 479.3L345.4 475.3M412.2 474.8L415.2 479.0M457.7 481.6L460.8 477.6M339.2 479.6L342.2 476.5L345.2 473.1M418.1 474.3L421.1 478.9M460.6 477.0L463.6 473.1M339.0 476.5L342.1 473.5M421.0 469.7L424.0 474.3M460.5 476.4L463.5 472.4M338.9 473.3L341.9 470.3M426.9 469.8L430.0 474.9M463.4 471.8L466.4 467.8M338.7 470.1L341.8 467.1M429.8 465.2L432.8 470.5M463.2 471.3L466.2 467.2M335.6 470.5L338.6 467.0L341.6 463.9M463.1 470.8L466.1 466.6M335.4 467.7L338.4 464.2L341.5 460.8M438.6 461.6L441.7 467.6M466.0 466.2L469.0 462.0M335.6 470.5L338.4 464.2M338.6 467.0L341.5 460.8M338.7 470.1L341.6 463.9M338.9 473.3L341.8 467.1M339.0 476.5L341.9 470.3M339.2 479.6L342.1 473.5M342.2 476.5L345.1 470.3M342.4 479.3L345.2 473.1M342.5 481.7L345.4 475.3M342.7 484.5L345.5 478.0M342.8 488.5L345.7 482.1M345.8 486.5L348.7 480.1M346.0 491.1L348.9 484.7M349.0 489.5L351.9 483.2M352.1 488.1L354.9 481.8M352.2 493.0L355.1 486.8M355.2 491.9L358.1 485.7M358.3 490.9L361.2 484.7M358.4 496.2L361.3 490.0M361.5 495.4L364.3 489.3M364.5 494.6L367.4 488.5M367.5 493.8L370.4 487.8M370.6 493.1L373.5 487.3M370.7 498.6L373.6 492.9L376.5 487.3M373.7 498.6L376.6 493.2L379.5 487.7M379.7 493.8L382.6 488.5M382.7 494.8L385.6 489.6M388.6 491.1L391.5 486.1M391.7 493.1L394.6 488.2L397.4 483.3M397.6 490.8L400.5 485.9L403.4 481.0M406.4 484.4L409.3 479.6M412.3 483.6L415.2 479.0L418.1 474.3M421.1 478.9L424.0 474.3L426.9 469.8M432.8 470.5L435.7 466.0L438.6 461.6M463.2 471.3L466.1 466.6L469.0 462.0M460.5 476.4L463.4 471.8L466.2 467.2M457.7 481.6L460.6 477.0L463.5 472.4M457.9 482.2L460.8 477.6M455.1 487.7L458.0 483.0L460.9 478.4M452.4 493.4L455.3 488.7L458.2 484.0M452.5 495.0L455.4 490.0L458.3 485.2M452.7 497.0L455.6 491.8M452.8 499.7L455.7 494.3M453.0 503.4L455.9 497.6L458.7 491.9M456.0 502.1L458.9 496.0M459.0 501.3L461.9 495.0M462.1 500.7L465.0 494.2M486.4 500.8L489.3 492.9M489.4 501.4L492.3 493.4M492.4 502.0L495.3 493.9M495.5 502.6L498.4 494.4M498.5 503.3L501.4 495.0M501.5 504.1L504.4 495.7M516.6 499.6L519.5 490.9M519.6 500.6L522.5 491.9M522.6 501.6L525.5 492.9M525.7 502.6L528.6 493.8M537.7 496.5L540.6 487.6M540.7 497.3L543.6 488.4M543.8 498.1L546.6 489.1M546.8 499.0L549.7 489.9M549.8 499.9L552.7 490.8M567.9 495.0L570.8 485.9M570.9 495.7L573.8 486.7" stroke="#ff5f00"/>
<path d="M458.9 496.0L461.9 495.0L465.0 494.2L468.0 493.4L471.0 492.8L474.1 492.6L477.1 492.5L480.1 492.4L483.2 492.4L486.2 492.6L489.3 492.9L492.3 493.4L495.3 493.9L498.4 494.4L501.4 495.0L504.4 495.7M455.7 494.3L458.7 491.9L461.8 490.1L464.8 488.8M513.4 489.0L516.4 490.0L519.5 490.9L522.5 491.9L525.5 492.9M455.6 491.8L458.6 488.9L461.6 486.2M537.5 486.8L540.6 487.6L543.6 488.4L546.6 489.1L549.7 489.9L552.7 490.8M367.4 488.5L370.4 487.8L373.5 487.3L376.5 487.3L379.5 487.7L382.6 488.5M455.4 490.0L458.5 486.7L461.5 483.6M564.7 484.3L567.7 485.1L570.8 485.9L573.8 486.7M358.1 485.7L361.2 484.7L364.2 483.9L367.2 483.2L370.3 482.5L373.3 481.9M382.4 482.4L385.4 483.3L388.5 484.5L391.5 486.1M458.3 485.2L461.3 481.7M351.9 483.2L354.9 481.8L358.0 480.6L361.0 479.5M391.4 479.4L394.4 481.1L397.4 483.3M458.2 484.0L461.2 480.4M345.7 482.1L348.7 480.1L351.8 478.4L354.8 476.9M400.3 478.3L403.4 481.0M458.0 483.0L461.1 479.3L464.1 475.6M345.5 478.0L348.6 475.7M406.3 476.2L409.3 479.6M460.9 478.4L463.9 474.6M345.4 475.3L348.4 471.6M409.1 471.3L412.2 474.8M460.8 477.6L463.8 473.8M345.2 473.1L348.3 469.0M415.1 470.1L418.1 474.3M463.6 473.1L466.7 469.3M342.1 473.5L345.1 470.3L348.1 467.0M463.5 472.4L466.5 468.5M341.9 470.3L345.0 467.3L348.0 464.2M423.9 465.0L426.9 469.8M466.4 467.8L469.4 463.9M341.8 467.1L344.8 464.2M466.2 467.2L469.3 463.2M341.6 463.9L344.7 460.9M432.7 460.7L435.7 466.0M466.1 466.6L469.1 462.6M341.5 460.8L344.5 457.7M435.6 456.1L438.6 461.6M469.0 462.0L472.0 458.1M341.6 463.9L344.5 457.7M341.8 467.1L344.7 460.9M341.9 470.3L344.8 464.2M342.1 473.5L345.0 467.3M345.1 470.3L348.0 464.2M345.2 473.1L348.1 467.0M345.4 475.3L348.3 469.0M345.5 478.0L348.4 471.6M345.7 482.1L348.6 475.7M348.7 480.1L351.6 473.7M348.9 484.7L351.8 478.4M351.9 483.2L354.8 476.9M354.9 481.8L357.8 475.6M355.1 486.8L358.0 480.6M358.1 485.7L361.0 479.5M361.2 484.7L364.0 478.6M361.3 490.0L364.2 483.9M364.3 489.3L367.2 483.2M367.4 488.5L370.3 482.5M370.4 487.8L373.3 481.9M373.5 487.3L376.3 481.6M376.5 487.3L379.4 481.8M379.5 487.7L382.4 482.4M382.6 488.5L385.4 483.3M385.6 489.6L388.5 484.5L391.4 479.4M391.5 486.1L394.4 481.1L397.3 476.1M397.4 483.3L400.3 478.3M403.4 481.0L406.3 476.2M409.3 479.6L412.2 474.8L415.1 470.1M418.1 474.3L421.0 469.7L423.9 465.0M426.9 469.8L429.8 465.2L432.7 460.7M466.2 467.2L469.1 462.6L472.0 458.1M463.5 472.4L466.4 467.8L469.3 463.2M460.8 477.6L463.6 473.1L466.5 468.5M460.9 478.4L463.8 473.8L466.7 469.3M458.2 484.0L461.1 479.3L463.9 474.6M458.3 485.2L461.2 480.4M455.6 491.8L458.5 486.7L461.3 481.7M455.7 494.3L458.6 488.9L461.5 483.6M458.7 491.9L461.6 486.2M458.9 496.0L461.8 490.1M461.9 495.0L464.8 488.8M465.0 494.2L467.9 487.7M465.1 500.1L468.0 493.4M468.1 499.8L471.0 492.8M471.2 499.7L474.1 492.6M474.2 499.8L477.1 492.5M477.3 499.9L480.1 492.4M480.3 500.1L483.2 492.4M483.3 500.4L486.2 492.6M501.4 495.0L504.3 486.7M504.4 495.7L507.3 487.3M507.5 496.5L510.4 488.1M510.5 497.5L513.4 489.0M513.5 498.6L516.4 490.0M525.5 492.9L528.4 484.1M528.6 493.8L531.5 485.0M531.6 494.7L534.5 485.9M534.6 495.7L537.5 486.8M552.7 490.8L555.6 481.7M555.7 491.6L558.6 482.6M558.8 492.5L561.7 483.4M561.8 493.4L564.7 484.3M564.9 494.2L567.7 485.1" stroke="#ff4d02"/>
<path d="M464.8 488.8L467.9 487.7L470.9 486.7L473.9 486.0L477.0 485.5L480.0 485.3M495.2 485.4L498.2 485.8L501.3 486.2L504.3 486.7L507.3 487.3L510.4 488.1L513.4 489.0M461.6 486.2L464.7 484.2L467.7 482.7M525.4 483.3L528.4 484.1L531.5 485.0L534.5 485.9L537.5 486.8M461.5 483.6L464.5 480.7M552.6 480.9L555.6 481.7L558.6 482.6L561.7 483.4L564.7 484.3M373.3 481.9L376.3 481.6L379.4 481.8L382.4 482.4M461.3 481.7L464.4 478.3M361.0 479.5L364.0 478.6L367.1 477.8L370.1 477.2L373.2 476.5L376.2 476.1L379.2 476.0L382.3 476.3L385.3 477.1L388.3 478.1L391.4 479.4M461.2 480.4L464.2 476.7M354.8 476.9L357.8 475.6L360.9 474.3L363.9 473.3M391.2 472.9L394.3 474.3L397.3 476.1L400.3 478.3M464.1 475.6L467.1 471.9M348.6 475.7L351.6 473.7L354.6 472.1L357.7 470.6M400.2 471.1L403.2 473.4L406.3 476.2M463.9 474.6L467.0 470.9M348.4 471.6L351.5 469.3M406.1 468.5L409.1 471.3M463.8 473.8L466.8 470.0M348.3 469.0L351.3 465.3M412.0 466.4L415.1 470.1M466.7 469.3L469.7 465.5M348.1 467.0L351.2 462.8M418.0 465.3L421.0 469.7M466.5 468.5L469.6 464.7M348.0 464.2L351.0 460.8M420.9 460.5L423.9 465.0M469.4 463.9L472.5 460.2M344.8 464.2L347.8 461.2L350.9 458.1M426.8 460.4L429.8 465.2M469.3 463.2L472.3 459.4M344.7 460.9L347.7 458.1M429.7 455.7L432.7 460.7M469.1 462.6L472.2 458.7M344.5 457.7L347.6 454.8M472.0 458.1L475.1 454.1M344.7 460.9L347.6 454.8M344.8 464.2L347.7 458.1M345.0 467.3L347.8 461.2L350.7 455.2M348.0 464.2L350.9 458.1M348.1 467.0L351.0 460.8M348.3 469.0L351.2 462.8M348.4 471.6L351.3 465.3M348.6 475.7L351.5 469.3M351.6 473.7L354.5 467.4M351.8 478.4L354.6 472.1M354.8 476.9L357.7 470.6M357.8 475.6L360.7 469.3M358.0 480.6L360.9 474.3M361.0 479.5L363.9 473.3M364.0 478.6L366.9 472.4M364.2 483.9L367.1 477.8L370.0 471.7M367.2 483.2L370.1 477.2M370.3 482.5L373.2 476.5M373.3 481.9L376.2 476.1M376.3 481.6L379.2 476.0M379.4 481.8L382.3 476.3M382.4 482.4L385.3 477.1M385.4 483.3L388.3 478.1L391.2 472.9M391.4 479.4L394.3 474.3M397.3 476.1L400.2 471.1M400.3 478.3L403.2 473.4L406.1 468.5M406.3 476.2L409.1 471.3L412.0 466.4M415.1 470.1L418.0 465.3L420.9 460.5M423.9 465.0L426.8 460.4M432.7 460.7L435.6 456.1M469.3 463.2L472.2 458.7L475.1 454.1M466.5 468.5L469.4 463.9L472.3 459.4M466.7 469.3L469.6 464.7M463.9 474.6L466.8 470.0L469.7 465.5M461.2 480.4L464.1 475.6L467.0 470.9M461.3 481.7L464.2 476.7M461.5 483.6L464.4 478.3M461.6 486.2L464.5 480.7M461.8 490.1L464.7 484.2M464.8 488.8L467.7 482.7M467.9 487.7L470.7 481.4M468.0 493.4L470.9 486.7M471.0 492.8L473.9 486.0M474.1 492.6L477.0 485.5M477.1 492.5L480.0 485.3M480.1 492.4L483.0 485.0M483.2 492.4L486.1 484.9M486.2 492.6L489.1 484.9M489.3 492.9L492.1 485.1M492.3 493.4L495.2 485.4M495.3 493.9L498.2 485.8M498.4 494.4L501.3 486.2M513.4 489.0L516.3 480.5M516.4 490.0L519.3 481.4M519.5 490.9L522.4 482.4M522.5 491.9L525.4 483.3M537.5 486.8L540.4 477.9M540.6 487.6L543.5 478.7M543.6 488.4L546.5 479.4M546.6 489.1L549.5 480.1M549.7 489.9L552.6 480.9M564.7 484.3L567.6 475.2M567.7 485.1L570.6 476.0M570.8 485.9L573.7 476.8M573.8 486.7L576.7 477.6" stroke="#ff3c0f"/>
<path d="M480.0 485.3L483.0 485.0L486.1 484.9L489.1 484.9L492.1 485.1L495.2 485.4M467.7 482.7L470.7 481.4L473.8 480.1L476.8 479.2M510.2 479.0L513.2 479.7L516.3 480.5L519.3 481.4L522.4 482.4L525.4 483.3M464.5 480.7L467.6 478.4L470.6 476.6M534.4 476.3L537.4 477.1L540.4 477.9L543.5 478.7L546.5 479.4L549.5 480.1L552.6 480.9M464.4 478.3L467.4 475.3M564.6 474.4L567.6 475.2L570.6 476.0L573.7 476.8L576.7 477.6M464.2 476.7L467.3 473.2M363.9 473.3L366.9 472.4L370.0 471.7L373.0 471.1L376.0 470.6L379.1 470.4L382.1 470.5L385.2 470.9L388.2 471.8L391.2 472.9M467.1 471.9L470.2 468.1M357.7 470.6L360.7 469.3L363.8 468.1L366.8 467.1M394.1 467.8L397.2 469.3L400.2 471.1M467.0 470.9L470.0 467.0M351.5 469.3L354.5 467.4L357.5 465.7L360.6 464.4M400.0 464.2L403.1 466.2L406.1 468.5M466.8 470.0L469.9 466.2M351.3 465.3L354.4 462.9M409.0 463.6L412.0 466.4M469.7 465.5L472.8 461.6M351.2 462.8L354.2 458.9M411.9 458.7L414.9 461.6L418.0 465.3M469.6 464.7L472.6 460.9M351.0 460.8L354.1 456.5M417.8 456.7L420.9 460.5M472.5 460.2L475.5 456.4M350.9 458.1L353.9 454.7M423.7 455.7L426.8 460.4M472.3 459.4L475.4 455.7M347.7 458.1L350.7 455.2L353.8 452.1M426.6 451.0L429.7 455.7M472.2 458.7L475.2 454.9L478.2 451.2M347.6 454.8L350.6 452.0L353.6 449.2M432.6 451.0L435.6 456.1M475.1 454.1L478.1 450.4M347.7 458.1L350.6 452.0M350.7 455.2L353.6 449.2M350.9 458.1L353.8 452.1M351.0 460.8L353.9 454.7M351.2 462.8L354.1 456.5M351.3 465.3L354.2 458.9M351.5 469.3L354.4 462.9M354.5 467.4L357.4 461.0M354.6 472.1L357.5 465.7M357.7 470.6L360.6 464.4M360.7 469.3L363.6 463.1M360.9 474.3L363.8 468.1M363.9 473.3L366.8 467.1M366.9 472.4L369.8 466.3M370.0 471.7L372.9 465.7M370.1 477.2L373.0 471.1M373.2 476.5L376.0 470.6M376.2 476.1L379.1 470.4M379.2 476.0L382.1 470.5M382.3 476.3L385.2 470.9M385.3 477.1L388.2 471.8L391.1 466.5M391.2 472.9L394.1 467.8M394.3 474.3L397.2 469.3L400.0 464.2M400.2 471.1L403.1 466.2L406.0 461.2M406.1 468.5L409.0 463.6M412.0 466.4L414.9 461.6L417.8 456.7M420.9 460.5L423.7 455.7M426.8 460.4L429.7 455.7L432.6 451.0M472.3 459.4L475.2 454.9L478.1 450.4M469.6 464.7L472.5 460.2L475.4 455.7M469.7 465.5L472.6 460.9M467.0 470.9L469.9 466.2L472.8 461.6M464.2 476.7L467.1 471.9L470.0 467.0M464.4 478.3L467.3 473.2M464.5 480.7L467.4 475.3M464.7 484.2L467.6 478.4L470.5 472.7M467.7 482.7L470.6 476.6M470.7 481.4L473.6 475.1M470.9 486.7L473.8 480.1M473.9 486.0L476.8 479.2M477.0 485.5L479.9 478.5M480.0 485.3L482.9 478.1M483.0 485.0L485.9 477.7M486.1 484.9L489.0 477.4M489.1 484.9L492.0 477.3M492.1 485.1L495.0 477.3M495.2 485.4L498.1 477.5M498.2 485.8L501.1 477.8M501.3 486.2L504.1 478.1M504.3 486.7L507.2 478.5M507.3 487.3L510.2 479.0M510.4 488.1L513.2 479.7M522.4 482.4L525.2 473.8M525.4 483.3L528.3 474.6M528.4 484.1L531.3 475.5M531.5 485.0L534.4 476.3M534.5 485.9L537.4 477.1M549.5 480.1L552.4 471.2M552.6 480.9L555.5 471.9M555.6 481.7L558.5 472.7M558.6 482.6L561.5 473.5M561.7 483.4L564.6 474.4M576.7 477.6L579.6 468.6" stroke="#ff2c1b"/>
<path d="M476.8 479.2L479.9 478.5L482.9 478.1L485.9 477.7L489.0 477.4L492.0 477.3L495.0 477.3L498.1 477.5L501.1 477.8L504.1 478.1L507.2 478.5L510.2 479.0M470.6 476.6L473.6 475.1L476.7 473.6L479.7 472.4M522.2 473.0L525.2 473.8L528.3 474.6L531.3 475.5L534.4 476.3M467.4 475.3L470.5 472.7L473.5 470.7M549.4 470.5L552.4 471.2L555.5 471.9L558.5 472.7L561.5 473.5L564.6 474.4M467.3 473.2L470.3 469.9L473.3 467.1M576.6 467.8L579.6 468.6M470.2 468.1L473.2 464.6M366.8 467.1L369.8 466.3L372.9 465.7L375.9 465.1L378.9 464.8L382.0 464.7L385.0 464.9L388.0 465.5L391.1 466.5L394.1 467.8M470.0 467.0L473.0 463.1M360.6 464.4L363.6 463.1L366.6 461.9L369.7 460.9M394.0 461.3L397.0 462.7L400.0 464.2M469.9 466.2L472.9 462.2M354.4 462.9L357.4 461.0L360.4 459.4L363.5 458.1M402.9 459.2L406.0 461.2L409.0 463.6M472.8 461.6L475.8 457.5M354.2 458.9L357.2 456.6M408.9 456.2L411.9 458.7M472.6 460.9L475.6 457.0M354.1 456.5L357.1 452.5M414.8 453.8L417.8 456.7M475.5 456.4L478.5 452.5M353.9 454.7L357.0 450.3M420.7 451.9L423.7 455.7M475.4 455.7L478.4 451.9M353.8 452.1L356.8 448.6M478.2 451.2L481.3 447.5M353.6 449.2L356.7 446.1M429.5 446.2L432.6 451.0M478.1 450.4L481.1 446.7M353.8 452.1L356.7 446.1M353.9 454.7L356.8 448.6M354.1 456.5L357.0 450.3M354.2 458.9L357.1 452.5M354.4 462.9L357.2 456.6M357.4 461.0L360.3 454.7M357.5 465.7L360.4 459.4M360.6 464.4L363.5 458.1M363.6 463.1L366.5 456.8M363.8 468.1L366.6 461.9M366.8 467.1L369.7 460.9M369.8 466.3L372.7 460.2M372.9 465.7L375.8 459.6M373.0 471.1L375.9 465.1L378.8 459.2M376.0 470.6L378.9 464.8M379.1 470.4L382.0 464.7M382.1 470.5L385.0 464.9L387.9 459.5M385.2 470.9L388.0 465.5L390.9 460.2M391.1 466.5L394.0 461.3M394.1 467.8L397.0 462.7L399.9 457.6M400.0 464.2L402.9 459.2M406.0 461.2L408.9 456.2M409.0 463.6L411.9 458.7L414.8 453.8M417.8 456.7L420.7 451.9M423.7 455.7L426.6 451.0L429.5 446.2M475.4 455.7L478.2 451.2L481.1 446.7M472.6 460.9L475.5 456.4L478.4 451.9M472.8 461.6L475.6 457.0M470.0 467.0L472.9 462.2L475.8 457.5M467.3 473.2L470.2 468.1L473.0 463.1M467.4 475.3L470.3 469.9L473.2 464.6M470.5 472.7L473.3 467.1M470.6 476.6L473.5 470.7M473.6 475.1L476.5 468.9M473.8 480.1L476.7 473.6M476.8 479.2L479.7 472.4M479.9 478.5L482.7 471.6M482.9 478.1L485.8 471.0M485.9 477.7L488.8 470.4M504.1 478.1L507.0 470.1M507.2 478.5L510.1 470.3M510.2 479.0L513.1 470.8M513.2 479.7L516.1 471.3M516.3 480.5L519.2 472.1M519.3 481.4L522.2 473.0M534.4 476.3L537.2 467.7M537.4 477.1L540.3 468.4M540.4 477.9L543.3 469.1M543.5 478.7L546.3 469.9M546.5 479.4L549.4 470.5M564.6 474.4L567.5 465.4M567.6 475.2L570.5 466.2M570.6 476.0L573.5 467.0M573.7 476.8L576.6 467.8" stroke="#ff1b28"/>
<path d="M479.7 472.4L482.7 471.6L485.8 471.0L488.8 470.4L491.8 470.0L494.9 469.7L497.9 469.6L501.0 469.7L504.0 469.9L507.0 470.1L510.1 470.3L513.1 470.8L516.1 471.3L519.2 472.1L522.2 473.0M473.5 470.7L476.5 468.9L479.6 467.2L482.6 465.8M531.2 466.1L534.2 466.9L537.2 467.7L540.3 468.4L543.3 469.1L546.3 469.9L549.4 470.5M473.3 467.1L476.4 464.8M561.4 463.8L564.4 464.6L567.5 465.4L570.5 466.2L573.5 467.0L576.6 467.8M473.2 464.6L476.2 461.6M473.0 463.1L476.1 459.4M369.7 460.9L372.7 460.2L375.8 459.6L378.8 459.2L381.8 459.0L384.9 459.1L387.9 459.5L390.9 460.2L394.0 461.3M472.9 462.2L475.9 458.2M363.5 458.1L366.5 456.8L369.5 455.7L372.6 454.8M393.8 454.9L396.9 456.1L399.9 457.6L402.9 459.2M475.8 457.5L478.8 453.3M357.2 456.6L360.3 454.7L363.3 453.1L366.4 451.8M402.8 452.5L405.8 454.2L408.9 456.2M475.6 457.0L478.7 452.8M357.1 452.5L360.1 450.2M408.7 449.2L411.7 451.3L414.8 453.8M478.5 452.5L481.6 448.2M357.0 450.3L360.0 446.2M414.6 446.3L417.7 448.9L420.7 451.9M478.4 451.9L481.4 448.0M356.8 448.6L359.8 444.1M420.6 443.9L423.6 447.0L426.6 451.0M481.3 447.5L484.3 443.5M356.7 446.1L359.7 442.6M426.5 442.1L429.5 446.2M481.1 446.7L484.2 443.0M356.8 448.6L359.7 442.6M357.0 450.3L359.8 444.1M357.1 452.5L360.0 446.2M357.2 456.6L360.1 450.2M360.3 454.7L363.2 448.3M360.4 459.4L363.3 453.1M363.5 458.1L366.4 451.8M366.5 456.8L369.4 450.6M366.6 461.9L369.5 455.7M369.7 460.9L372.6 454.8M372.7 460.2L375.6 454.1M375.8 459.6L378.6 453.5M378.8 459.2L381.7 453.3M378.9 464.8L381.8 459.0L384.7 453.3M382.0 464.7L384.9 459.1L387.8 453.6M387.9 459.5L390.8 454.0M390.9 460.2L393.8 454.9M394.0 461.3L396.9 456.1L399.7 450.9M399.9 457.6L402.8 452.5M402.9 459.2L405.8 454.2L408.7 449.2M408.9 456.2L411.7 451.3L414.6 446.3M414.8 453.8L417.7 448.9L420.6 443.9M420.7 451.9L423.6 447.0L426.5 442.1M478.4 451.9L481.3 447.5L484.2 443.0M475.6 457.0L478.5 452.5L481.4 448.0M475.8 457.5L478.7 452.8M473.0 463.1L475.9 458.2L478.8 453.3M473.2 464.6L476.1 459.4M473.3 467.1L476.2 461.6M473.5 470.7L476.4 464.8M476.5 468.9L479.4 462.8M476.7 473.6L479.6 467.2M479.7 472.4L482.6 465.8M482.7 471.6L485.6 464.8M489.0 477.4L491.8 470.0M492.0 477.3L494.9 469.7M495.0 477.3L497.9 469.6M498.1 477.5L501.0 469.7M501.1 477.8L504.0 469.9M519.2 472.1L522.1 463.8M522.2 473.0L525.1 464.6M525.2 473.8L528.1 465.3M528.3 474.6L531.2 466.1M531.3 475.5L534.2 466.9M546.3 469.9L549.2 461.1M549.4 470.5L552.3 461.7M552.4 471.2L555.3 462.3M555.5 471.9L558.3 463.0M558.5 472.7L561.4 463.8M561.5 473.5L564.4 464.6M576.6 467.8L579.4 458.9M579.6 468.6L582.5 459.6" stroke="#ff0a34"/>
<path d="M482.6 465.8L485.6 464.8L488.7 464.0L491.7 463.3L494.7 462.7L497.8 462.2M513.0 462.3L516.0 462.6L519.0 463.1L522.1 463.8L525.1 464.6L528.1 465.3L531.2 466.1M476.4 464.8L479.4 462.8L482.4 460.8M543.2 459.8L546.2 460.4L549.2 461.1L552.3 461.7L555.3 462.3L558.3 463.0L561.4 463.8M476.2 461.6L479.3 459.1L482.3 456.8M576.4 458.1L579.4 458.9L582.5 459.6M476.1 459.4L479.1 456.1M475.9 458.2L479.0 454.3M372.6 454.8L375.6 454.1L378.6 453.5L381.7 453.3L384.7 453.3L387.8 453.6L390.8 454.0L393.8 454.9M478.8 453.3L481.9 449.3M366.4 451.8L369.4 450.6L372.4 449.5L375.5 448.6L378.5 447.9M390.6 448.0L393.7 448.7L396.7 449.6L399.7 450.9L402.8 452.5M478.7 452.8L481.7 448.5M360.1 450.2L363.2 448.3L366.2 446.8L369.2 445.6M402.6 445.8L405.7 447.4L408.7 449.2M481.6 448.2L484.6 443.8M360.0 446.2L363.0 443.9M411.6 444.2L414.6 446.3M481.4 448.0L484.5 443.6M359.8 444.1L362.9 439.8M417.5 441.4L420.6 443.9M484.3 443.5L487.3 439.1M359.7 442.6L362.7 437.9M423.4 439.0L426.5 442.1M484.2 443.0L487.2 439.0M359.8 444.1L362.7 437.9M360.0 446.2L362.9 439.8M360.1 450.2L363.0 443.9M363.2 448.3L366.1 442.0M363.3 453.1L366.2 446.8M366.4 451.8L369.2 445.6M369.4 450.6L372.3 444.4M369.5 455.7L372.4 449.5M372.6 454.8L375.5 448.6M375.6 454.1L378.5 447.9M378.6 453.5L381.5 447.5M381.7 453.3L384.6 447.5M384.7 453.3L387.6 447.7M387.8 453.6L390.6 448.0M390.8 454.0L393.7 448.7M393.8 454.9L396.7 449.6M399.7 450.9L402.6 445.8M402.8 452.5L405.7 447.4L408.6 442.3M408.7 449.2L411.6 444.2M414.6 446.3L417.5 441.4M420.6 443.9L423.4 439.0M481.4 448.0L484.3 443.5L487.2 439.0M478.7 452.8L481.6 448.2L484.5 443.6M478.8 453.3L481.7 448.5M476.1 459.4L479.0 454.3L481.9 449.3M476.2 461.6L479.1 456.1M476.4 464.8L479.3 459.1M479.4 462.8L482.3 456.8M479.6 467.2L482.4 460.8M482.6 465.8L485.5 459.2M485.6 464.8L488.5 458.0M485.8 471.0L488.7 464.0M488.8 470.4L491.7 463.3M491.8 470.0L494.7 462.7M494.9 469.7L497.8 462.2M497.9 469.6L500.8 462.0M501.0 469.7L503.8 462.0M504.0 469.9L506.9 462.0M507.0 470.1L509.9 462.1M510.1 470.3L513.0 462.3M513.1 470.8L516.0 462.6M516.1 471.3L519.0 463.1M531.2 466.1L534.1 457.7M534.2 466.9L537.1 458.4M537.2 467.7L540.1 459.1M540.3 468.4L543.2 459.8M543.3 469.1L546.2 460.4M561.4 463.8L564.3 454.9M564.4 464.6L567.3 455.7M567.5 465.4L570.3 456.5M570.5 466.2L573.4 457.3M573.5 467.0L576.4 458.1" stroke="#ff0047"/>
<path d="M497.8 462.2L500.8 462.0L503.8 462.0L506.9 462.0L509.9 462.1L513.0 462.3M482.4 460.8L485.5 459.2L488.5 458.0L491.6 457.1L494.6 456.2M528.0 456.2L531.0 457.0L534.1 457.7L537.1 458.4L540.1 459.1L543.2 459.8M482.3 456.8L485.3 454.6M558.2 453.5L561.2 454.2L564.3 454.9L567.3 455.7L570.3 456.5L573.4 457.3L576.4 458.1M479.1 456.1L482.2 453.4L485.2 450.9M479.0 454.3L482.0 450.8L485.0 447.8M481.9 449.3L484.9 445.6M378.5 447.9L381.5 447.5L384.6 447.5L387.6 447.7L390.6 448.0M481.7 448.5L484.8 444.3M369.2 445.6L372.3 444.4L375.3 443.3L378.3 442.5L381.4 441.8M390.5 442.1L393.5 442.6L396.6 443.3L399.6 444.4L402.6 445.8M363.0 443.9L366.1 442.0L369.1 440.5L372.1 439.3M402.5 439.2L405.5 440.6L408.6 442.3L411.6 444.2M484.5 443.6L487.5 439.1M362.9 439.8L365.9 437.5M411.5 437.3L414.5 439.2L417.5 441.4M362.7 437.9L365.8 433.5M417.4 434.2L420.4 436.4L423.4 439.0M487.2 439.0L490.2 434.6M362.9 439.8L365.8 433.5M363.0 443.9L365.9 437.5M366.1 442.0L368.9 435.7M366.2 446.8L369.1 440.5M369.2 445.6L372.1 439.3M372.3 444.4L375.2 438.2M372.4 449.5L375.3 443.3M375.5 448.6L378.3 442.5M378.5 447.9L381.4 441.8M381.5 447.5L384.4 441.6M384.6 447.5L387.5 441.7M387.6 447.7L390.5 442.1M390.6 448.0L393.5 442.6M393.7 448.7L396.6 443.3M396.7 449.6L399.6 444.4L402.5 439.2M402.6 445.8L405.5 440.6M408.6 442.3L411.5 437.3M411.6 444.2L414.5 439.2L417.4 434.2M417.5 441.4L420.4 436.4M484.5 443.6L487.3 439.1L490.2 434.6M481.7 448.5L484.6 443.8L487.5 439.1M481.9 449.3L484.8 444.3M479.1 456.1L482.0 450.8L484.9 445.6M479.3 459.1L482.2 453.4L485.0 447.8M482.3 456.8L485.2 450.9M482.4 460.8L485.3 454.6M485.5 459.2L488.4 452.8M488.7 464.0L491.6 457.1M491.7 463.3L494.6 456.2M494.7 462.7L497.6 455.4M497.8 462.2L500.7 454.8M500.8 462.0L503.7 454.4M503.8 462.0L506.7 454.3M506.9 462.0L509.8 454.3M509.9 462.1L512.8 454.2M513.0 462.3L515.8 454.3M516.0 462.6L518.9 454.5M519.0 463.1L521.9 454.9M522.1 463.8L525.0 455.5M525.1 464.6L528.0 456.2M528.1 465.3L531.0 457.0M543.2 459.8L546.1 451.2M546.2 460.4L549.1 451.8M549.2 461.1L552.1 452.4M552.3 461.7L555.2 452.9M555.3 462.3L558.2 453.5M558.3 463.0L561.2 454.2M573.4 457.3L576.3 448.4M576.4 458.1L579.3 449.2M579.4 458.9L582.3 450.0M582.5 459.6L585.4 450.8" stroke="#ff0064"/>
<path d="M494.6 456.2L497.6 455.4L500.7 454.8L503.7 454.4L506.7 454.3L509.8 454.3L512.8 454.2L515.8 454.3L518.9 454.5L521.9 454.9L525.0 455.5L528.0 456.2M485.3 454.6L488.4 452.8L491.4 451.4L494.4 450.2M540.0 449.9L543.0 450.6L546.1 451.2L549.1 451.8L552.1 452.4L555.2 452.9L558.2 453.5M485.2 450.9L488.2 448.5L491.3 446.4M573.2 447.6L576.3 448.4L579.3 449.2L582.3 450.0L585.4 450.8M485.0 447.8L488.1 445.1M484.9 445.6L487.9 442.4M484.8 444.3L487.8 440.4M381.4 441.8L384.4 441.6L387.5 441.7L390.5 442.1M484.6 443.8L487.6 439.4M372.1 439.3L375.2 438.2L378.2 437.2L381.2 436.3L384.3 435.8L387.3 435.7L390.3 436.0L393.4 436.5L396.4 437.1L399.5 438.0L402.5 439.2M487.5 439.1L490.5 434.6M365.9 437.5L368.9 435.7L372.0 434.3L375.0 433.1M402.3 432.7L405.4 434.0L408.4 435.5L411.5 437.3M487.3 439.1L490.4 434.5M365.8 433.5L368.8 431.2M411.3 430.4L414.3 432.3L417.4 434.2M490.2 434.6L493.3 429.9M365.9 437.5L368.8 431.2M368.9 435.7L371.8 429.4M369.1 440.5L372.0 434.3M372.1 439.3L375.0 433.1M375.2 438.2L378.1 432.0M375.3 443.3L378.2 437.2M378.3 442.5L381.2 436.3M381.4 441.8L384.3 435.8M384.4 441.6L387.3 435.7M387.5 441.7L390.3 436.0M390.5 442.1L393.4 436.5M393.5 442.6L396.4 437.1L399.3 431.8M396.6 443.3L399.5 438.0L402.3 432.7M402.5 439.2L405.4 434.0M405.5 440.6L408.4 435.5L411.3 430.4M411.5 437.3L414.3 432.3M487.5 439.1L490.4 434.5L493.3 429.9M484.8 444.3L487.6 439.4L490.5 434.6M484.9 445.6L487.8 440.4M485.0 447.8L487.9 442.4M485.2 450.9L488.1 445.1M485.3 454.6L488.2 448.5M488.4 452.8L491.3 446.4M488.5 458.0L491.4 451.4M491.6 457.1L494.4 450.2M494.6 456.2L497.5 449.2M497.6 455.4L500.5 448.3M500.7 454.8L503.6 447.5M525.0 455.5L527.8 447.4M528.0 456.2L530.9 448.0M531.0 457.0L533.9 448.7M534.1 457.7L536.9 449.3M537.1 458.4L540.0 449.9M540.1 459.1L543.0 450.6M558.2 453.5L561.1 444.8M561.2 454.2L564.1 445.4M564.3 454.9L567.2 446.1M567.3 455.7L570.2 446.8M570.3 456.5L573.2 447.6M585.4 450.8L588.3 441.9" stroke="#ff0081"/>
<path d="M494.4 450.2L497.5 449.2L500.5 448.3L503.6 447.5L506.6 447.0L509.6 446.8L512.7 446.6L515.7 446.5L518.7 446.4L521.8 446.5L524.8 446.8L527.8 447.4L530.9 448.0L533.9 448.7L536.9 449.3L540.0 449.9M491.3 446.4L494.3 444.8L497.3 443.5M552.0 443.2L555.0 443.8L558.1 444.3L561.1 444.8L564.1 445.4L567.2 446.1L570.2 446.8L573.2 447.6M488.1 445.1L491.1 442.4L494.2 440.1M585.2 441.2L588.3 441.9M487.9 442.4L491.0 439.4M487.8 440.4L490.8 437.0M487.6 439.4L490.7 435.3M490.5 434.6L493.6 430.4M375.0 433.1L378.1 432.0L381.1 431.0L384.1 430.2L387.2 429.8L390.2 429.9L393.2 430.3L396.3 431.0L399.3 431.8L402.3 432.7M490.4 434.5L493.4 429.9M368.8 431.2L371.8 429.4L374.9 428.0L377.9 426.8M402.2 426.4L405.2 427.4L408.3 428.8L411.3 430.4M493.3 429.9L496.3 425.2M372.0 434.3L374.9 428.0M375.0 433.1L377.9 426.8M378.1 432.0L380.9 425.8M378.2 437.2L381.1 431.0M381.2 436.3L384.1 430.2M384.3 435.8L387.2 429.8M387.3 435.7L390.2 429.9M390.3 436.0L393.2 430.3M393.4 436.5L396.3 431.0L399.2 425.5M399.3 431.8L402.2 426.4M402.3 432.7L405.2 427.4M405.4 434.0L408.3 428.8M490.5 434.6L493.4 429.9M487.8 440.4L490.7 435.3L493.6 430.4M487.9 442.4L490.8 437.0M488.1 445.1L491.0 439.4M488.2 448.5L491.1 442.4M491.3 446.4L494.2 440.1M491.4 451.4L494.3 444.8M494.4 450.2L497.3 443.5M497.5 449.2L500.4 442.3M500.5 448.3L503.4 441.2M503.7 454.4L506.6 447.0M506.7 454.3L509.6 446.8M509.8 454.3L512.7 446.6M512.8 454.2L515.7 446.5M515.8 454.3L518.7 446.4M518.9 454.5L521.8 446.5M521.9 454.9L524.8 446.8M536.9 449.3L539.8 441.0M540.0 449.9L542.9 441.6M543.0 450.6L545.9 442.1M546.1 451.2L548.9 442.7M549.1 451.8L552.0 443.2M552.1 452.4L555.0 443.8M555.2 452.9L558.1 444.3M570.2 446.8L573.1 438.1M573.2 447.6L576.1 438.8M576.3 448.4L579.2 439.6M579.3 449.2L582.2 440.4M582.3 450.0L585.2 441.2" stroke="#ff009f"/>
<path d="M497.3 443.5L500.4 442.3L503.4 441.2L506.4 440.3L509.5 439.7M530.7 439.3L533.8 439.9L536.8 440.4L539.8 441.0L542.9 441.6L545.9 442.1L548.9 442.7L552.0 443.2M494.2 440.1L497.2 438.4L500.2 436.9M570.0 437.4L573.1 438.1L576.1 438.8L579.2 439.6L582.2 440.4L585.2 441.2M491.0 439.4L494.0 436.5L497.0 434.0M490.8 437.0L493.9 433.7M490.7 435.3L493.7 431.7M493.6 430.4L496.6 426.5M493.4 429.9L496.5 425.4M377.9 426.8L380.9 425.8L384.0 424.8L387.0 424.1L390.1 423.9L393.1 424.2L396.1 424.7L399.2 425.5L402.2 426.4M381.1 431.0L384.0 424.8M384.1 430.2L387.0 424.1M387.2 429.8L390.1 423.9M390.2 429.9L393.1 424.2M393.2 430.3L396.1 424.7M493.4 429.9L496.3 425.2M493.6 430.4L496.5 425.4M490.8 437.0L493.7 431.7L496.6 426.5M491.0 439.4L493.9 433.7M491.1 442.4L494.0 436.5M494.2 440.1L497.0 434.0M494.3 444.8L497.2 438.4M497.3 443.5L500.2 436.9M500.4 442.3L503.3 435.5M503.6 447.5L506.4 440.3M506.6 447.0L509.5 439.7M509.6 446.8L512.5 439.3M512.7 446.6L515.5 439.0M515.7 446.5L518.6 438.8M518.7 446.4L521.6 438.6M521.8 446.5L524.7 438.6M524.8 446.8L527.7 438.8M527.8 447.4L530.7 439.3M530.9 448.0L533.8 439.9M533.9 448.7L536.8 440.4M548.9 442.7L551.8 434.3M552.0 443.2L554.9 434.8M555.0 443.8L557.9 435.2M558.1 444.3L560.9 435.6M561.1 444.8L564.0 436.1M564.1 445.4L567.0 436.7M567.2 446.1L570.0 437.4M582.2 440.4L585.1 431.6M585.2 441.2L588.1 432.4M588.3 441.9L591.2 433.2" stroke="#ff00bc"/>
<path d="M509.5 439.7L512.5 439.3L515.5 439.0L518.6 438.8L521.6 438.6L524.7 438.6L527.7 438.8L530.7 439.3M500.2 436.9L503.3 435.5L506.3 434.2L509.3 433.2M545.8 433.3L548.8 433.8L551.8 434.3L554.9 434.8L557.9 435.2L560.9 435.6L564.0 436.1L567.0 436.7L570.0 437.4M497.0 434.0L500.1 432.0L503.1 430.3M582.0 430.8L585.1 431.6L588.1 432.4L591.2 433.2M493.9 433.7L496.9 430.7L499.9 427.9M493.7 431.7L496.7 428.2L499.8 424.9M496.6 426.5L499.6 422.8M496.5 425.4L499.5 421.4M496.3 425.2L499.3 420.6M496.5 425.4L499.3 420.6M496.6 426.5L499.5 421.4M493.9 433.7L496.7 428.2L499.6 422.8M494.0 436.5L496.9 430.7L499.8 424.9M497.0 434.0L499.9 427.9M497.2 438.4L500.1 432.0M500.2 436.9L503.1 430.3M503.3 435.5L506.1 428.8M503.4 441.2L506.3 434.2M506.4 440.3L509.3 433.2M509.5 439.7L512.4 432.4M512.5 439.3L515.4 431.9M515.5 439.0L518.4 431.5M518.6 438.8L521.5 431.2M521.6 438.6L524.5 430.9M524.7 438.6L527.5 430.8M527.7 438.8L530.6 431.0M530.7 439.3L533.6 431.3M533.8 439.9L536.7 431.8M536.8 440.4L539.7 432.3M539.8 441.0L542.7 432.8M542.9 441.6L545.8 433.3M545.9 442.1L548.8 433.8M567.0 436.7L569.9 428.1M570.0 437.4L572.9 428.7M573.1 438.1L576.0 429.4M576.1 438.8L579.0 430.1M579.2 439.6L582.0 430.8" stroke="#f600d1"/>
<path d="M509.3 433.2L512.4 432.4L515.4 431.9L518.4 431.5L521.5 431.2L524.5 430.9L527.5 430.8L530.6 431.0L533.6 431.3L536.7 431.8L539.7 432.3L542.7 432.8L545.8 433.3M503.1 430.3L506.1 428.8L509.2 427.4M560.8 426.8L563.8 427.1L566.9 427.5L569.9 428.1L572.9 428.7L576.0 429.4L579.0 430.1L582.0 430.8M499.9 427.9L503.0 425.8L506.0 423.9M499.8 424.9L502.8 422.0M499.6 422.8L502.7 419.3M499.5 421.4L502.5 417.5M499.3 420.6L502.4 416.4M499.5 421.4L502.4 416.4M499.6 422.8L502.5 417.5M499.8 424.9L502.7 419.3M499.9 427.9L502.8 422.0M500.1 432.0L503.0 425.8M503.1 430.3L506.0 423.9M506.3 434.2L509.2 427.4M509.3 433.2L512.2 426.2M512.4 432.4L515.3 425.3M515.4 431.9L518.3 424.7M539.7 432.3L542.6 424.3M542.7 432.8L545.6 424.7M545.8 433.3L548.7 425.1M548.8 433.8L551.7 425.6M551.8 434.3L554.7 426.0M554.9 434.8L557.8 426.4M557.9 435.2L560.8 426.8M560.9 435.6L563.8 427.1M564.0 436.1L566.9 427.5M579.0 430.1L581.9 421.4M582.0 430.8L584.9 422.2M585.1 431.6L588.0 422.9M588.1 432.4L591.0 423.7M591.2 433.2L594.0 424.5" stroke="#e500e2"/>
<path d="M509.2 427.4L512.2 426.2L515.3 425.3L518.3 424.7L521.3 424.2L524.4 423.7L527.4 423.3L530.4 423.1L533.5 423.2L536.5 423.5L539.5 423.9L542.6 424.3L545.6 424.7L548.7 425.1L551.7 425.6L554.7 426.0L557.8 426.4L560.8 426.8M506.0 423.9L509.0 422.2L512.1 420.6M578.9 420.7L581.9 421.4L584.9 422.2L588.0 422.9L591.0 423.7L594.0 424.5M502.8 422.0L505.9 419.6L508.9 417.6M502.7 419.3L505.7 416.1M502.5 417.5L505.6 413.7M502.4 416.4L505.4 412.2M502.5 417.5L505.4 412.2M502.7 419.3L505.6 413.7M502.8 422.0L505.7 416.1M503.0 425.8L505.9 419.6M506.0 423.9L508.9 417.6M506.1 428.8L509.0 422.2M509.2 427.4L512.1 420.6M512.2 426.2L515.1 419.3M515.3 425.3L518.1 418.3M518.4 431.5L521.3 424.2M521.5 431.2L524.4 423.7M524.5 430.9L527.4 423.3M527.5 430.8L530.4 423.1M530.6 431.0L533.5 423.2M533.6 431.3L536.5 423.5M536.7 431.8L539.5 423.9M554.7 426.0L557.6 417.7M557.8 426.4L560.6 418.0M560.8 426.8L563.7 418.4M563.8 427.1L566.7 418.7M566.9 427.5L569.8 419.0M569.9 428.1L572.8 419.5M572.9 428.7L575.8 420.1M576.0 429.4L578.9 420.7M594.0 424.5L596.9 415.8" stroke="#d500f2"/>
<path d="M512.1 420.6L515.1 419.3L518.1 418.3L521.2 417.5L524.2 416.9M548.5 416.7L551.5 417.0L554.6 417.4L557.6 417.7L560.6 418.0L563.7 418.4L566.7 418.7L569.8 419.0L572.8 419.5L575.8 420.1L578.9 420.7M508.9 417.6L511.9 415.7L515.0 414.0M590.9 414.3L593.9 415.1L596.9 415.8M505.7 416.1L508.7 413.6L511.8 411.3M505.6 413.7L508.6 410.3M505.4 412.2L508.5 408.3M505.6 413.7L508.5 408.3M505.7 416.1L508.6 410.3M505.9 419.6L508.7 413.6M508.9 417.6L511.8 411.3M509.0 422.2L511.9 415.7M512.1 420.6L515.0 414.0M515.1 419.3L518.0 412.5M518.3 424.7L521.2 417.5M521.3 424.2L524.2 416.9M524.4 423.7L527.3 416.3M527.4 423.3L530.3 415.8M530.4 423.1L533.3 415.5M533.5 423.2L536.4 415.5M536.5 423.5L539.4 415.7M539.5 423.9L542.4 416.0M542.6 424.3L545.5 416.4M545.6 424.7L548.5 416.7M548.7 425.1L551.5 417.0M551.7 425.6L554.6 417.4M575.8 420.1L578.7 411.5M578.9 420.7L581.8 412.1M581.9 421.4L584.8 412.8M584.9 422.2L587.8 413.5M588.0 422.9L590.9 414.3M591.0 423.7L593.9 415.1" stroke="#c504ff"/>
<path d="M524.2 416.9L527.3 416.3L530.3 415.8L533.3 415.5L536.4 415.5L539.4 415.7L542.4 416.0L545.5 416.4L548.5 416.7M515.0 414.0L518.0 412.5L521.0 411.3L524.1 410.5M569.6 410.3L572.6 410.6L575.7 411.0L578.7 411.5L581.8 412.1L584.8 412.8L587.8 413.5L590.9 414.3M511.8 411.3L514.8 409.3L517.9 407.4M508.6 410.3L511.6 407.6L514.7 405.2M508.5 408.3L511.5 404.7M508.6 410.3L511.5 404.7M508.7 413.6L511.6 407.6L514.5 401.7M511.8 411.3L514.7 405.2M511.9 415.7L514.8 409.3M515.0 414.0L517.9 407.4M518.0 412.5L520.9 405.8M518.1 418.3L521.0 411.3M521.2 417.5L524.1 410.5M524.2 416.9L527.1 409.7M527.3 416.3L530.1 409.0M530.3 415.8L533.2 408.4M533.3 415.5L536.2 408.0M536.4 415.5L539.3 407.9M539.4 415.7L542.3 408.0M542.4 416.0L545.3 408.3M545.5 416.4L548.4 408.5M548.5 416.7L551.4 408.8M551.5 417.0L554.4 409.0M554.6 417.4L557.5 409.3M557.6 417.7L560.5 409.5M560.6 418.0L563.5 409.8M563.7 418.4L566.6 410.0M566.7 418.7L569.6 410.3M569.8 419.0L572.6 410.6M572.8 419.5L575.7 411.0M587.8 413.5L590.7 404.9M590.9 414.3L593.7 405.7M593.9 415.1L596.8 406.4M596.9 415.8L599.8 407.2" stroke="#b718ff"/>
<path d="M524.1 410.5L527.1 409.7L530.1 409.0L533.2 408.4L536.2 408.0L539.3 407.9L542.3 408.0L545.3 408.3L548.4 408.5L551.4 408.8L554.4 409.0L557.5 409.3L560.5 409.5L563.5 409.8L566.6 410.0L569.6 410.3M517.9 407.4L520.9 405.8L523.9 404.5M587.7 404.2L590.7 404.9L593.7 405.7L596.8 406.4L599.8 407.2M514.7 405.2L517.7 402.9L520.7 400.9M511.5 404.7L514.5 401.7L517.6 399.1M514.7 405.2L517.6 399.1M514.8 409.3L517.7 402.9M517.9 407.4L520.7 400.9M521.0 411.3L523.9 404.5M524.1 410.5L527.0 403.5M527.1 409.7L530.0 402.6M530.1 409.0L533.0 401.8M557.5 409.3L560.4 401.3M560.5 409.5L563.4 401.4M563.5 409.8L566.4 401.6M566.6 410.0L569.5 401.8M569.6 410.3L572.5 401.9M572.6 410.6L575.5 402.2M575.7 411.0L578.6 402.5M578.7 411.5L581.6 403.0M581.8 412.1L584.6 403.6M584.8 412.8L587.7 404.2M599.8 407.2L602.7 398.6" stroke="#a92cff"/>
<path d="M523.9 404.5L527.0 403.5L530.0 402.6L533.0 401.8L536.1 401.1L539.1 400.6L542.1 400.3L545.2 400.4L548.2 400.6L551.2 400.7L554.3 400.9L557.3 401.1L560.4 401.3L563.4 401.4L566.4 401.6L569.5 401.8L572.5 401.9L575.5 402.2L578.6 402.5L581.6 403.0L584.6 403.6L587.7 404.2M520.7 400.9L523.8 399.1L526.8 397.7M599.7 397.8L602.7 398.6M517.6 399.1L520.6 396.7L523.6 394.5M517.7 402.9L520.6 396.7M520.7 400.9L523.6 394.5M520.9 405.8L523.8 399.1M523.9 404.5L526.8 397.7M527.0 403.5L529.8 396.6M530.0 402.6L532.9 395.6M533.2 408.4L536.1 401.1M536.2 408.0L539.1 400.6M539.3 407.9L542.1 400.3M542.3 408.0L545.2 400.4M545.3 408.3L548.2 400.6M548.4 408.5L551.2 400.7M551.4 408.8L554.3 400.9M554.4 409.0L557.3 401.1M584.6 403.6L587.5 395.1M587.7 404.2L590.6 395.7M590.7 404.9L593.6 396.4M593.7 405.7L596.6 397.1M596.8 406.4L599.7 397.8" stroke="#9b40ff"/>
<path d="M526.8 397.7L529.8 396.6L532.9 395.6L535.9 394.7L539.0 393.9M578.4 393.8L581.5 394.1L584.5 394.5L587.5 395.1L590.6 395.7L593.6 396.4L596.6 397.1L599.7 397.8M523.6 394.5L526.7 392.6L529.7 391.0M523.8 399.1L526.7 392.6M526.8 397.7L529.7 391.0M529.8 396.6L532.7 389.8M533.0 401.8L535.9 394.7M536.1 401.1L539.0 393.9M539.1 400.6L542.0 393.2M542.1 400.3L545.0 392.9M545.2 400.4L548.1 392.8M548.2 400.6L551.1 392.9M551.2 400.7L554.1 393.0M554.3 400.9L557.2 393.1M557.3 401.1L560.2 393.2M560.4 401.3L563.2 393.3M563.4 401.4L566.3 393.4M566.4 401.6L569.3 393.5M569.5 401.8L572.4 393.5M572.5 401.9L575.4 393.6M575.5 402.2L578.4 393.8M578.6 402.5L581.5 394.1M581.6 403.0L584.5 394.5M596.6 397.1L599.5 388.5M599.7 397.8L602.6 389.2M602.7 398.6L605.6 390.0" stroke="#8d54ff"/>
<path d="M539.0 393.9L542.0 393.2L545.0 392.9L548.1 392.8L551.1 392.9L554.1 393.0L557.2 393.1L560.2 393.2L563.2 393.3L566.3 393.4L569.3 393.5L572.4 393.5L575.4 393.6L578.4 393.8M529.7 391.0L532.7 389.8L535.8 388.7L538.8 387.6M593.5 387.1L596.5 387.8L599.5 388.5L602.6 389.2L605.6 390.0M532.9 395.6L535.8 388.7M535.9 394.7L538.8 387.6M539.0 393.9L541.8 386.7M542.0 393.2L544.9 386.0M545.0 392.9L547.9 385.5M548.1 392.8L551.0 385.3M551.1 392.9L554.0 385.3M554.1 393.0L557.0 385.3M557.2 393.1L560.1 385.3M560.2 393.2L563.1 385.3M563.2 393.3L566.1 385.3M566.3 393.4L569.2 385.3M569.3 393.5L572.2 385.3M572.4 393.5L575.2 385.3M575.4 393.6L578.3 385.3M578.4 393.8L581.3 385.4M581.5 394.1L584.3 385.7M584.5 394.5L587.4 386.1M587.5 395.1L590.4 386.6M590.6 395.7L593.5 387.1M593.6 396.4L596.5 387.8" stroke="#8166ff"/>
<path d="M538.8 387.6L541.8 386.7L544.9 386.0L547.9 385.5L551.0 385.3L554.0 385.3L557.0 385.3L560.1 385.3L563.1 385.3L566.1 385.3L569.2 385.3L572.2 385.3L575.2 385.3L578.3 385.3L581.3 385.4L584.3 385.7L587.4 386.1L590.4 386.6L593.5 387.1" stroke="#7b72ff"/>
</g>
<g shape-rendering="crispEdges" fill="none" stroke="#404040">
<path d="M199.5 674.5h4M199.5 651.5h4M199.5 628.5h4M199.5 605.5h4M199.5 581.5h4M199.5 558.5h4M199.5 535.5h4M199.5 511.5h4M199.5 488.5h4M225.5 675v3M249.5 675v3M273.5 675v3M296.5 675v4M320.5 675v3M344.5 675v3M368.5 675v3M392.5 675v4M415.5 675v3M439.5 675v3M463.5 675v3"/>
</g>
<text x="198.5" y="678.5" text-anchor="end">0</text>
<text x="198.5" y="655.2" text-anchor="end">0.05</text>
<text x="198.5" y="631.9" text-anchor="end">0.1</text>
<text x="198.5" y="608.5" text-anchor="end">0.15</text>
<text x="198.5" y="585.2" text-anchor="end">0.2</text>
<text x="198.5" y="561.9" text-anchor="end">0.25</text>
<text x="198.5" y="538.5" text-anchor="end">0.3</text>
<text x="198.5" y="515.2" text-anchor="end">0.35</text>
<text x="198.5" y="491.9" text-anchor="end">0.4</text>
<text x="296.3" y="693" text-anchor="middle">3</text><text x="392.5" y="693" text-anchor="middle">4</text>
<text x="499.8" y="680" text-anchor="middle">0</text>
<text x="530" y="658.2" text-anchor="middle">0.1</text>
<text x="557.6" y="636.1" text-anchor="middle">0.2</text>
<text x="583.5" y="614" text-anchor="middle">0.3</text>
<text x="609.4" y="592" text-anchor="middle">0.4</text>
<text x="402.5" y="368" text-anchor="middle" fill="#0000ff">Evolution de la prime en fonction de la vol</text>
</svg>
</div>
</body></html>
